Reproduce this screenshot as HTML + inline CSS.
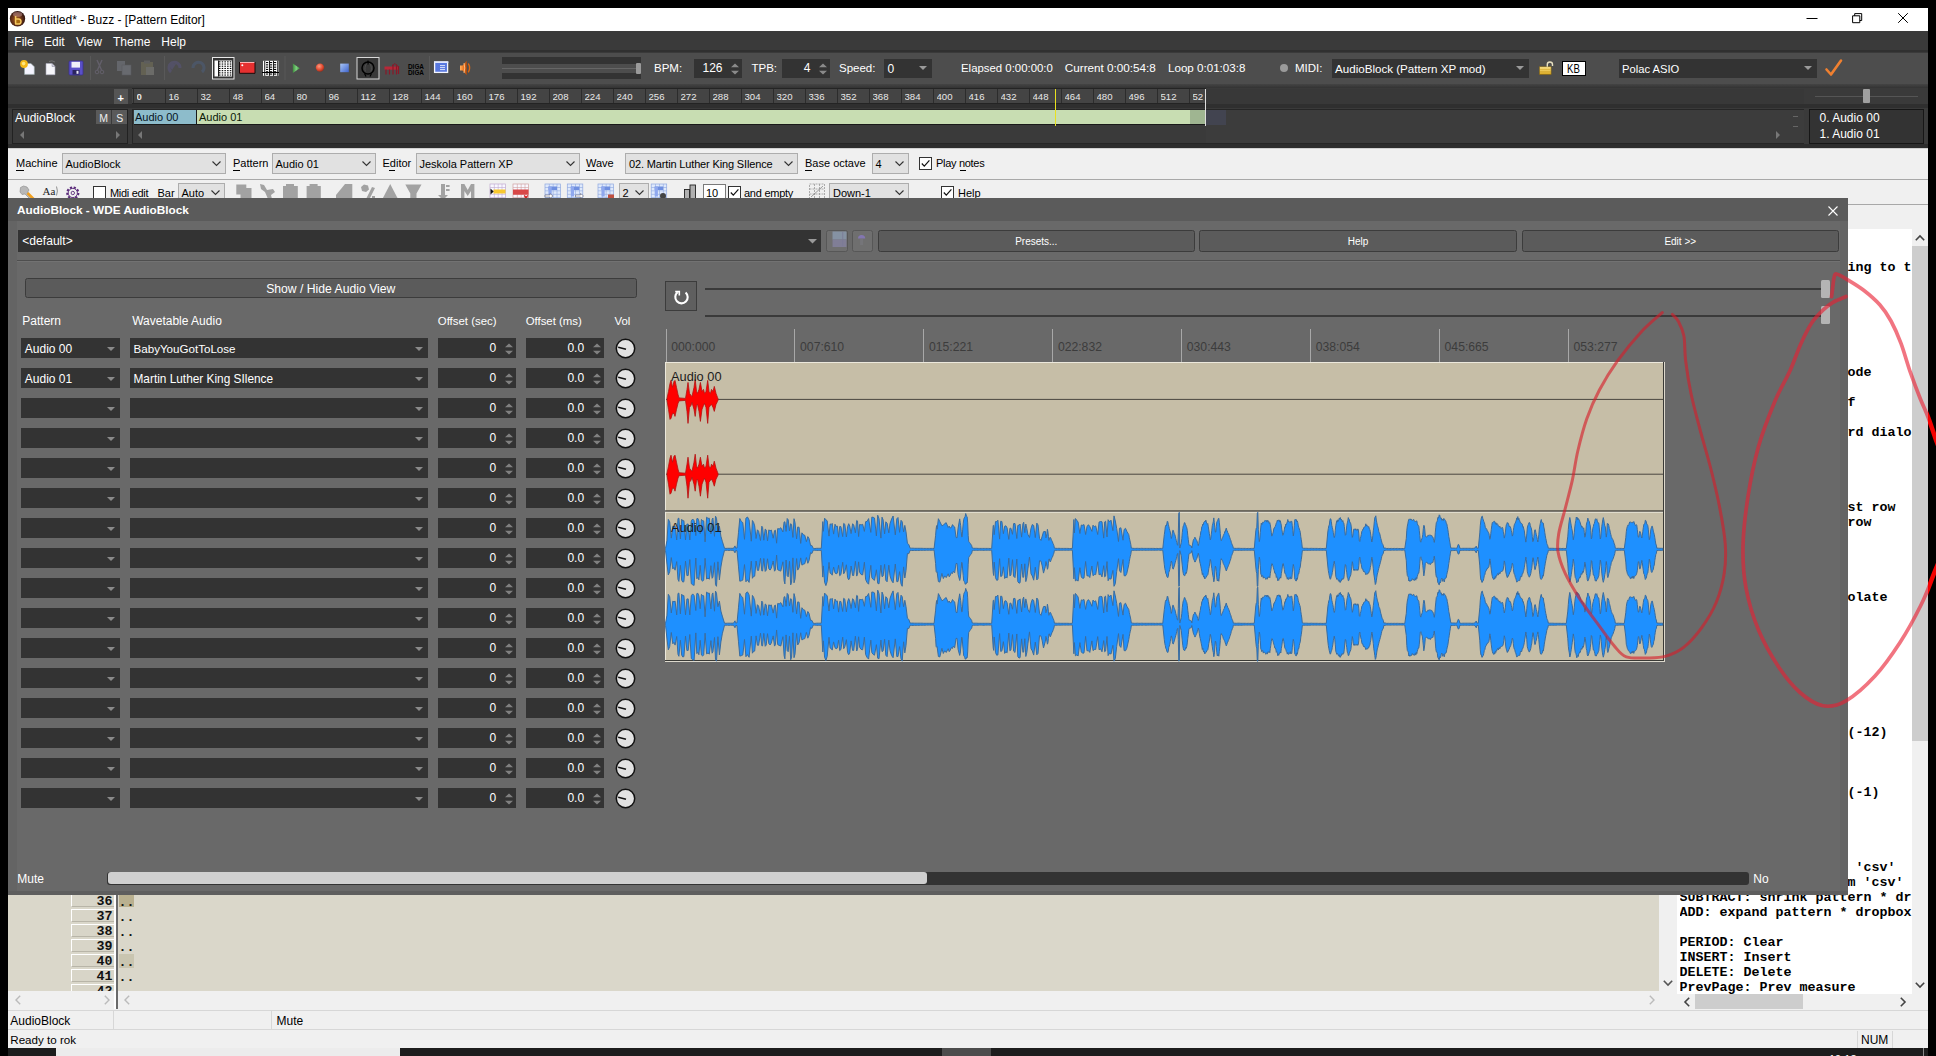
<!DOCTYPE html><html><head><meta charset="utf-8"><title>Buzz</title><style>
*{box-sizing:border-box;margin:0;padding:0}
html,body{width:1936px;height:1056px;overflow:hidden;background:#000}
body{font-family:"Liberation Sans",sans-serif;font-size:12px;position:relative}
div{position:absolute}
svg{position:absolute;overflow:visible}
.t{white-space:pre;line-height:20px;height:20px}
.w{color:#fff}
.m{font-family:"Liberation Mono",monospace;font-weight:bold;font-size:13.33px;white-space:pre;line-height:15px;height:15px;color:#000}
.cb{background:#e1e1e1;border:1px solid #adadad}
.dk{background:#333}
</style></head><body>
<div style="left:8px;top:8px;width:1920px;height:1040px;background:#f0f0f0"></div>
<div style="left:8px;top:8px;width:1920px;height:23px;background:#fff"></div>
<svg style="left:9px;top:10px" width="18" height="18" viewBox="0 0 18 18"><defs><radialGradient id="bz" cx="0.45" cy="0.55" r="0.55"><stop offset="0" stop-color="#b06c20"/><stop offset="0.5" stop-color="#74391a"/><stop offset="1" stop-color="#2e1410"/></radialGradient></defs><circle cx="8.5" cy="8.8" r="7.7" fill="url(#bz)"/><ellipse cx="8.6" cy="4.4" rx="4.6" ry="2.4" fill="#d8a8a8" opacity="0.45"/><path d="M6.6 5.9v8.2h2.8a2.6 2.6 0 0 0 0-5.2h-2.8" fill="#a86a10" stroke="#f4c860" stroke-width="1.5" stroke-linejoin="round"/></svg>
<div class="t" style="left:31.5px;top:9.5px;color:#000">Untitled* - Buzz - [Pattern Editor]</div>
<svg style="left:1800px;top:8px" width="128" height="23" viewBox="0 0 128 23" fill="none" stroke="#000" stroke-width="1"><path d="M6.5 10.5h11"/><path d="M52.6 7.8h7.2v6.9h-7.2z"/><path d="M54.7 7.8v-2.2h7v6.9h-1.9"/><path d="M98.2 5.2l9.6 9.6M107.8 5.2l-9.6 9.6"/></svg>
<div style="left:8px;top:31px;width:1920px;height:21px;background:#3a3a3a"></div>
<div style="left:8px;top:50px;width:1920px;height:2.3px;background:#303030"></div>
<div class="t" style="left:14.3px;top:31.5px;color:#fff">File</div>
<div class="t" style="left:44px;top:31.5px;color:#fff">Edit</div>
<div class="t" style="left:76px;top:31.5px;color:#fff">View</div>
<div class="t" style="left:113px;top:31.5px;color:#fff">Theme</div>
<div class="t" style="left:161.3px;top:31.5px;color:#fff">Help</div>
<div style="left:8px;top:52px;width:1920px;height:32px;background:#4d4d4d"></div>
<div style="left:8px;top:52px;width:1920px;height:1px;background:#3a3a3a"></div>
<svg style="left:0;top:0" width="1936" height="90" viewBox="0 0 1936 90"><defs><linearGradient id="gb" x1="0" y1="0" x2="1" y2="1"><stop offset="0" stop-color="#a9c6f7"/><stop offset="1" stop-color="#3f64cc"/></linearGradient><radialGradient id="gr" cx="0.4" cy="0.35" r="0.7"><stop offset="0" stop-color="#ff9a80"/><stop offset="0.6" stop-color="#e04a30"/><stop offset="1" stop-color="#8a2a1a"/></radialGradient><linearGradient id="gg" x1="0" y1="0" x2="1" y2="0"><stop offset="0" stop-color="#3c8a3c"/><stop offset="0.5" stop-color="#7fd07f"/><stop offset="1" stop-color="#3c9a3c"/></linearGradient><linearGradient id="go" x1="0" y1="0" x2="1" y2="0"><stop offset="0" stop-color="#ffb060"/><stop offset="0.5" stop-color="#f07820"/><stop offset="1" stop-color="#b04808"/></linearGradient><linearGradient id="gy" x1="0" y1="0" x2="0" y2="1"><stop offset="0" stop-color="#ffe890"/><stop offset="1" stop-color="#d8a820"/></linearGradient></defs><path d="M24.5 63.5h6.5l3.3 3.3v7.6h-9.8z" fill="#f4f4ff" stroke="#9aa" stroke-width="0.6"/><circle cx="24" cy="64" r="3.9" fill="#f5b818"/><circle cx="23.6" cy="63.6" r="1.8" fill="#ffe680"/><path d="M46 63.5h6l3 3v8.2h-9z" fill="#f6f6fa" stroke="#aab" stroke-width="0.6"/><path d="M52 63.5v3h3" fill="#ccd" stroke="#889" stroke-width="0.5"/><path d="M49 61.5q3-1.6 6 0.5" fill="none" stroke="#777" stroke-width="0.8"/><rect x="69" y="61" width="14" height="14" rx="1" fill="#5a50c8" stroke="#3a3090" stroke-width="0.8"/><rect x="71.5" y="61.8" width="8.5" height="5.8" fill="#f0f0fa"/><rect x="72.5" y="70" width="7" height="4.6" fill="#2a2460"/><rect x="76.5" y="70.8" width="2" height="3" fill="#e8e8f8"/><rect x="90" y="56" width="1" height="24" fill="#595959"/><rect x="164" y="56" width="1" height="24" fill="#595959"/><rect x="284.5" y="56" width="1" height="24" fill="#595959"/><rect x="429" y="56" width="1" height="24" fill="#595959"/><g opacity="0.22"><path d="M97 60l4.5 10M102 60l-4.5 10" stroke="#b0a0d0" stroke-width="1.4" fill="none"/><circle cx="97" cy="72" r="1.8" fill="none" stroke="#b0a0d0"/><circle cx="102" cy="72" r="1.8" fill="none" stroke="#b0a0d0"/><rect x="117" y="61" width="8" height="10" fill="#b8c0d8"/><rect x="122" y="65" width="9" height="10" fill="#c8d0e8" stroke="#889" stroke-width="0.6"/><rect x="141" y="62" width="12" height="13" fill="#b0a868"/><rect x="144" y="60.5" width="6" height="3" fill="#999"/><rect x="146" y="67" width="8" height="8" fill="#d8d8c8"/><path d="M171 72a5.5 5.5 0 1 1 9-4" fill="none" stroke="#6a60c0" stroke-width="3"/><path d="M168 64l4 6 4-6z" fill="#6a60c0"/><path d="M202 72a5.5 5.5 0 1 0-9-4" fill="none" stroke="#4a78c0" stroke-width="3"/></g><rect x="212.5" y="57.5" width="21.5" height="21.5" fill="#333" stroke="#e8e8e8" stroke-width="1"/><rect x="214.5" y="60.5" width="17.5" height="16" fill="#fff"/><rect x="219.0" y="61.3" width="1.5" height="1.1" fill="#000"/><rect x="221.7" y="61.3" width="1.5" height="1.1" fill="#000"/><rect x="224.4" y="61.3" width="1.5" height="1.1" fill="#000"/><rect x="227.1" y="61.3" width="1.5" height="1.1" fill="#000"/><rect x="229.8" y="61.3" width="1.5" height="1.1" fill="#000"/><rect x="219.0" y="63.5" width="1.5" height="1.1" fill="#000"/><rect x="221.7" y="63.5" width="1.5" height="1.1" fill="#000"/><rect x="224.4" y="63.5" width="1.5" height="1.1" fill="#000"/><rect x="227.1" y="63.5" width="1.5" height="1.1" fill="#000"/><rect x="229.8" y="63.5" width="1.5" height="1.1" fill="#000"/><rect x="219.0" y="65.7" width="1.5" height="1.1" fill="#000"/><rect x="221.7" y="65.7" width="1.5" height="1.1" fill="#000"/><rect x="224.4" y="65.7" width="1.5" height="1.1" fill="#000"/><rect x="227.1" y="65.7" width="1.5" height="1.1" fill="#000"/><rect x="229.8" y="65.7" width="1.5" height="1.1" fill="#000"/><rect x="219.0" y="67.9" width="1.5" height="1.1" fill="#000"/><rect x="221.7" y="67.9" width="1.5" height="1.1" fill="#000"/><rect x="224.4" y="67.9" width="1.5" height="1.1" fill="#000"/><rect x="227.1" y="67.9" width="1.5" height="1.1" fill="#000"/><rect x="229.8" y="67.9" width="1.5" height="1.1" fill="#000"/><rect x="219.0" y="70.1" width="1.5" height="1.1" fill="#000"/><rect x="221.7" y="70.1" width="1.5" height="1.1" fill="#000"/><rect x="224.4" y="70.1" width="1.5" height="1.1" fill="#000"/><rect x="227.1" y="70.1" width="1.5" height="1.1" fill="#000"/><rect x="229.8" y="70.1" width="1.5" height="1.1" fill="#000"/><rect x="219.0" y="72.3" width="1.5" height="1.1" fill="#000"/><rect x="221.7" y="72.3" width="1.5" height="1.1" fill="#000"/><rect x="224.4" y="72.3" width="1.5" height="1.1" fill="#000"/><rect x="227.1" y="72.3" width="1.5" height="1.1" fill="#000"/><rect x="229.8" y="72.3" width="1.5" height="1.1" fill="#000"/><rect x="219.0" y="74.5" width="1.5" height="1.1" fill="#000"/><rect x="221.7" y="74.5" width="1.5" height="1.1" fill="#000"/><rect x="224.4" y="74.5" width="1.5" height="1.1" fill="#000"/><rect x="227.1" y="74.5" width="1.5" height="1.1" fill="#000"/><rect x="229.8" y="74.5" width="1.5" height="1.1" fill="#000"/><rect x="218" y="60.5" width="0.9" height="16" fill="#000"/><rect x="239.5" y="62" width="15.5" height="11.3" fill="#e63030"/><rect x="239.5" y="62" width="15.5" height="1" fill="#ffb0b0"/><path d="M239.5 62v11.3h15.5v-11.3" fill="none" stroke="#1a0a0a" stroke-width="1"/><circle cx="242.3" cy="65.3" r="1" fill="#fff"/><rect x="263" y="60.8" width="15.5" height="15" fill="#fff"/><rect x="266.0" y="62.0" width="2.2" height="1.1" fill="#000"/><rect x="270.0" y="62.0" width="2.2" height="1.1" fill="#000"/><rect x="274.0" y="62.0" width="2.2" height="1.1" fill="#000"/><rect x="266.0" y="64.3" width="2.2" height="1.1" fill="#000"/><rect x="270.0" y="64.3" width="2.2" height="1.1" fill="#000"/><rect x="274.0" y="64.3" width="2.2" height="1.1" fill="#000"/><rect x="266.0" y="66.6" width="2.2" height="1.1" fill="#000"/><rect x="270.0" y="66.6" width="2.2" height="1.1" fill="#000"/><rect x="274.0" y="66.6" width="2.2" height="1.1" fill="#000"/><rect x="266.0" y="68.9" width="2.2" height="1.1" fill="#000"/><rect x="270.0" y="68.9" width="2.2" height="1.1" fill="#000"/><rect x="274.0" y="68.9" width="2.2" height="1.1" fill="#000"/><rect x="266.0" y="71.2" width="2.2" height="1.1" fill="#000"/><rect x="270.0" y="71.2" width="2.2" height="1.1" fill="#000"/><rect x="274.0" y="71.2" width="2.2" height="1.1" fill="#000"/><rect x="266.0" y="73.5" width="2.2" height="1.1" fill="#000"/><rect x="270.0" y="73.5" width="2.2" height="1.1" fill="#000"/><rect x="274.0" y="73.5" width="2.2" height="1.1" fill="#000"/><rect x="264.3" y="60.8" width="0.9" height="15" fill="#000"/><rect x="269" y="60.8" width="0.9" height="15" fill="#000"/><rect x="273" y="60.8" width="0.9" height="15" fill="#000"/><rect x="277.3" y="60.8" width="0.9" height="15" fill="#000"/><rect x="262" y="72" width="17" height="1" fill="#000"/><path d="M292.8 63.4L299.8 68.2L292.8 73z" fill="url(#gg)"/><circle cx="320" cy="67.6" r="4.2" fill="url(#gr)"/><rect x="340.2" y="63.6" width="8.6" height="8.6" fill="url(#gb)"/><rect x="357" y="57.5" width="22" height="21.5" fill="#383838" stroke="#d8d8d8" stroke-width="1"/><circle cx="368" cy="68" r="6" fill="none" stroke="#000" stroke-width="1.5"/><path d="M368 60.5v4" stroke="#000" stroke-width="1.2"/><path d="M364.5 73.5l1.5 3M371.5 73.5l-1.5 3" stroke="#000" stroke-width="1.2"/><path d="M367 63.5c-2 1-2.6 6-1.6 8M369.5 63.5c2 1 2.4 6 1.4 8" stroke="#555" stroke-width="0.8" fill="none"/><rect x="384.5" y="66.5" width="14.5" height="3.2" fill="#b82838"/><path d="M386 69.5v5M389.5 69.5v5M393 64.5v10M396.5 64.5v10M398.5 66v8" stroke="#8a1828" stroke-width="1.2"/><path d="M392 66l3-2.5 3 3" stroke="#8a1828" stroke-width="1" fill="none"/><text x="408" y="69.3" font-family="Liberation Sans" font-weight="bold" font-size="6.4" fill="#000" textLength="16" lengthAdjust="spacingAndGlyphs">DIGA</text><text x="408" y="75.3" font-family="Liberation Sans" font-weight="bold" font-size="6.4" fill="#000" textLength="16" lengthAdjust="spacingAndGlyphs">DIGA</text><rect x="434.6" y="62" width="13" height="10.4" fill="#5878e0" stroke="#f4f6ff" stroke-width="1.3"/><rect x="434" y="61.4" width="14.3" height="1.6" fill="#dfe6ff"/><path d="M440 65.6h5M440 67.6h5M440 69.6h5" stroke="#e8eeff" stroke-width="0.9"/><path d="M460 65.5h2.6l4.2-4.8v14.6l-4.2-4.8h-2.6z" fill="url(#go)"/><path d="M468.3 63.5q2.6 4.4 0 8.8" fill="none" stroke="#e06810" stroke-width="1.4"/><path d="M464 63q1.5 5 0 10" stroke="#ffd0a0" stroke-width="0.8" fill="none"/><rect x="1539.5" y="66.8" width="11.6" height="7.6" fill="url(#gy)" stroke="#8a6810" stroke-width="0.6"/><path d="M1540 69.3h10.6M1540 71.8h10.6" stroke="#c89a20" stroke-width="0.6"/><path d="M1547.3 66.8v-2.2a2.6 2.6 0 0 1 5.2 0v1.4" fill="none" stroke="#e8e0c0" stroke-width="1.4"/></svg>
<div style="left:502px;top:57px;width:139px;height:6.5px;background:#333"></div>
<div style="left:502px;top:72.5px;width:139px;height:6.5px;background:#333"></div>
<div style="left:502px;top:67.5px;width:136px;height:1px;background:#666"></div>
<div style="left:636px;top:63px;width:5px;height:11px;background:#9a9a9a;border-radius:1px"></div>
<div class="t" style="left:654px;top:58px;color:#fff;font-size:11.5px">BPM:</div>
<div style="left:694px;top:58.5px;width:48px;height:19.5px;background:#333"></div>
<div class="t" style="left:694px;top:57.5px;color:#fff;width:28.5px;text-align:right">126</div>
<div class="t" style="left:751.5px;top:58px;color:#fff;font-size:11.5px">TPB:</div>
<div style="left:782px;top:58.5px;width:48px;height:19.5px;background:#333"></div>
<div class="t" style="left:782px;top:57.5px;color:#fff;width:28.5px;text-align:right">4</div>
<div class="t" style="left:839px;top:58px;color:#fff;font-size:11.5px">Speed:</div>
<div style="left:884px;top:58.5px;width:48px;height:19.5px;background:#333"></div>
<div class="t" style="left:887.5px;top:58.5px;color:#fff">0</div>
<svg style="left:731px;top:62.5px" width="8" height="12" viewBox="0 0 8 12"><path d="M0 4.2L4 0.6L8 4.2zM0 7.8L4 11.4L8 7.8z" fill="#8a8a8a"/></svg>
<svg style="left:819px;top:62.5px" width="8" height="12" viewBox="0 0 8 12"><path d="M0 4.2L4 0.6L8 4.2zM0 7.8L4 11.4L8 7.8z" fill="#8a8a8a"/></svg>
<svg style="left:919px;top:66px" width="8" height="4" viewBox="0 0 8 4"><path d="M0 0H8L4.0 4z" fill="#9a9a9a"/></svg>
<div class="t" style="left:961px;top:58px;color:#fff;font-size:11.4px">Elapsed 0:00:00:0</div>
<div class="t" style="left:1064.8px;top:58px;color:#fff;font-size:11.7px">Current 0:00:54:8</div>
<div class="t" style="left:1168px;top:58px;color:#fff;font-size:11.6px">Loop 0:01:03:8</div>
<div style="left:1279.5px;top:64px;width:8px;height:8px;background:#9a9a9a;border-radius:50%"></div>
<div class="t" style="left:1295px;top:58px;color:#fff;font-size:11.5px">MIDI:</div>
<div style="left:1331.5px;top:58.5px;width:197px;height:19.5px;background:#333"></div>
<div class="t" style="left:1335px;top:58.5px;color:#fff;font-size:11.6px">AudioBlock (Pattern XP mod)</div>
<svg style="left:1515.5px;top:66px" width="8" height="4" viewBox="0 0 8 4"><path d="M0 0H8L4.0 4z" fill="#9a9a9a"/></svg>
<div style="left:1562px;top:61px;width:23.5px;height:14.5px;background:#fff;border:1px solid #000"></div>
<div class="t" style="left:1567.3px;top:59px;color:#000;font-size:12px;transform:scaleX(0.8);transform-origin:0 0">KB</div>
<div style="left:1618.5px;top:58.5px;width:198.5px;height:19.5px;background:#333"></div>
<div class="t" style="left:1622px;top:58.5px;color:#fff;font-size:11.2px">Polac ASIO</div>
<svg style="left:1803.5px;top:66px" width="8" height="4" viewBox="0 0 8 4"><path d="M0 0H8L4.0 4z" fill="#9a9a9a"/></svg>
<svg style="left:1825px;top:59px" width="18" height="18" viewBox="0 0 18 18"><path d="M1.5 10.5L6 15.5L16 1.5" fill="none" stroke="#f08030" stroke-width="2.6" stroke-linecap="round" stroke-linejoin="round"/></svg>
<div style="left:8px;top:84px;width:1920px;height:64px;background:#3a3a3a"></div>
<div style="left:8px;top:83.5px;width:1920px;height:4px;background:linear-gradient(#444,#333)"></div>
<div style="left:8px;top:103.7px;width:1920px;height:4.8px;background:#2f2f2f"></div>
<div style="left:8px;top:143.5px;width:1920px;height:4px;background:#2d2d2d"></div>
<div style="left:132px;top:88.5px;width:1073.5px;height:15px;background:#444"></div>
<div style="left:1205.5px;top:88.5px;width:598.5px;height:15px;background:#383838"></div>
<div style="left:132.5px;top:88.5px;width:1px;height:15px;background:#2c2c2c"></div>
<div class="t" style="left:136.5px;top:86.5px;color:#e8e8e8;font-size:9.6px;font-weight:bold;width:30px;overflow:hidden">0</div>
<div style="left:164.5px;top:88.5px;width:1px;height:15px;background:#2c2c2c"></div>
<div class="t" style="left:168.5px;top:86.5px;color:#e8e8e8;font-size:9.6px;width:30px;overflow:hidden">16</div>
<div style="left:196.5px;top:88.5px;width:1px;height:15px;background:#2c2c2c"></div>
<div class="t" style="left:200.5px;top:86.5px;color:#e8e8e8;font-size:9.6px;width:30px;overflow:hidden">32</div>
<div style="left:228.5px;top:88.5px;width:1px;height:15px;background:#2c2c2c"></div>
<div class="t" style="left:232.5px;top:86.5px;color:#e8e8e8;font-size:9.6px;width:30px;overflow:hidden">48</div>
<div style="left:260.5px;top:88.5px;width:1px;height:15px;background:#2c2c2c"></div>
<div class="t" style="left:264.5px;top:86.5px;color:#e8e8e8;font-size:9.6px;width:30px;overflow:hidden">64</div>
<div style="left:292.5px;top:88.5px;width:1px;height:15px;background:#2c2c2c"></div>
<div class="t" style="left:296.5px;top:86.5px;color:#e8e8e8;font-size:9.6px;width:30px;overflow:hidden">80</div>
<div style="left:324.5px;top:88.5px;width:1px;height:15px;background:#2c2c2c"></div>
<div class="t" style="left:328.5px;top:86.5px;color:#e8e8e8;font-size:9.6px;width:30px;overflow:hidden">96</div>
<div style="left:356.5px;top:88.5px;width:1px;height:15px;background:#2c2c2c"></div>
<div class="t" style="left:360.5px;top:86.5px;color:#e8e8e8;font-size:9.6px;width:30px;overflow:hidden">112</div>
<div style="left:388.5px;top:88.5px;width:1px;height:15px;background:#2c2c2c"></div>
<div class="t" style="left:392.5px;top:86.5px;color:#e8e8e8;font-size:9.6px;width:30px;overflow:hidden">128</div>
<div style="left:420.5px;top:88.5px;width:1px;height:15px;background:#2c2c2c"></div>
<div class="t" style="left:424.5px;top:86.5px;color:#e8e8e8;font-size:9.6px;width:30px;overflow:hidden">144</div>
<div style="left:452.5px;top:88.5px;width:1px;height:15px;background:#2c2c2c"></div>
<div class="t" style="left:456.5px;top:86.5px;color:#e8e8e8;font-size:9.6px;width:30px;overflow:hidden">160</div>
<div style="left:484.5px;top:88.5px;width:1px;height:15px;background:#2c2c2c"></div>
<div class="t" style="left:488.5px;top:86.5px;color:#e8e8e8;font-size:9.6px;width:30px;overflow:hidden">176</div>
<div style="left:516.5px;top:88.5px;width:1px;height:15px;background:#2c2c2c"></div>
<div class="t" style="left:520.5px;top:86.5px;color:#e8e8e8;font-size:9.6px;width:30px;overflow:hidden">192</div>
<div style="left:548.5px;top:88.5px;width:1px;height:15px;background:#2c2c2c"></div>
<div class="t" style="left:552.5px;top:86.5px;color:#e8e8e8;font-size:9.6px;width:30px;overflow:hidden">208</div>
<div style="left:580.5px;top:88.5px;width:1px;height:15px;background:#2c2c2c"></div>
<div class="t" style="left:584.5px;top:86.5px;color:#e8e8e8;font-size:9.6px;width:30px;overflow:hidden">224</div>
<div style="left:612.5px;top:88.5px;width:1px;height:15px;background:#2c2c2c"></div>
<div class="t" style="left:616.5px;top:86.5px;color:#e8e8e8;font-size:9.6px;width:30px;overflow:hidden">240</div>
<div style="left:644.5px;top:88.5px;width:1px;height:15px;background:#2c2c2c"></div>
<div class="t" style="left:648.5px;top:86.5px;color:#e8e8e8;font-size:9.6px;width:30px;overflow:hidden">256</div>
<div style="left:676.5px;top:88.5px;width:1px;height:15px;background:#2c2c2c"></div>
<div class="t" style="left:680.5px;top:86.5px;color:#e8e8e8;font-size:9.6px;width:30px;overflow:hidden">272</div>
<div style="left:708.5px;top:88.5px;width:1px;height:15px;background:#2c2c2c"></div>
<div class="t" style="left:712.5px;top:86.5px;color:#e8e8e8;font-size:9.6px;width:30px;overflow:hidden">288</div>
<div style="left:740.5px;top:88.5px;width:1px;height:15px;background:#2c2c2c"></div>
<div class="t" style="left:744.5px;top:86.5px;color:#e8e8e8;font-size:9.6px;width:30px;overflow:hidden">304</div>
<div style="left:772.5px;top:88.5px;width:1px;height:15px;background:#2c2c2c"></div>
<div class="t" style="left:776.5px;top:86.5px;color:#e8e8e8;font-size:9.6px;width:30px;overflow:hidden">320</div>
<div style="left:804.5px;top:88.5px;width:1px;height:15px;background:#2c2c2c"></div>
<div class="t" style="left:808.5px;top:86.5px;color:#e8e8e8;font-size:9.6px;width:30px;overflow:hidden">336</div>
<div style="left:836.5px;top:88.5px;width:1px;height:15px;background:#2c2c2c"></div>
<div class="t" style="left:840.5px;top:86.5px;color:#e8e8e8;font-size:9.6px;width:30px;overflow:hidden">352</div>
<div style="left:868.5px;top:88.5px;width:1px;height:15px;background:#2c2c2c"></div>
<div class="t" style="left:872.5px;top:86.5px;color:#e8e8e8;font-size:9.6px;width:30px;overflow:hidden">368</div>
<div style="left:900.5px;top:88.5px;width:1px;height:15px;background:#2c2c2c"></div>
<div class="t" style="left:904.5px;top:86.5px;color:#e8e8e8;font-size:9.6px;width:30px;overflow:hidden">384</div>
<div style="left:932.5px;top:88.5px;width:1px;height:15px;background:#2c2c2c"></div>
<div class="t" style="left:936.5px;top:86.5px;color:#e8e8e8;font-size:9.6px;width:30px;overflow:hidden">400</div>
<div style="left:964.5px;top:88.5px;width:1px;height:15px;background:#2c2c2c"></div>
<div class="t" style="left:968.5px;top:86.5px;color:#e8e8e8;font-size:9.6px;width:30px;overflow:hidden">416</div>
<div style="left:996.5px;top:88.5px;width:1px;height:15px;background:#2c2c2c"></div>
<div class="t" style="left:1000.5px;top:86.5px;color:#e8e8e8;font-size:9.6px;width:30px;overflow:hidden">432</div>
<div style="left:1028.5px;top:88.5px;width:1px;height:15px;background:#2c2c2c"></div>
<div class="t" style="left:1032.5px;top:86.5px;color:#e8e8e8;font-size:9.6px;width:30px;overflow:hidden">448</div>
<div style="left:1060.5px;top:88.5px;width:1px;height:15px;background:#2c2c2c"></div>
<div class="t" style="left:1064.5px;top:86.5px;color:#e8e8e8;font-size:9.6px;width:30px;overflow:hidden">464</div>
<div style="left:1092.5px;top:88.5px;width:1px;height:15px;background:#2c2c2c"></div>
<div class="t" style="left:1096.5px;top:86.5px;color:#e8e8e8;font-size:9.6px;width:30px;overflow:hidden">480</div>
<div style="left:1124.5px;top:88.5px;width:1px;height:15px;background:#2c2c2c"></div>
<div class="t" style="left:1128.5px;top:86.5px;color:#e8e8e8;font-size:9.6px;width:30px;overflow:hidden">496</div>
<div style="left:1156.5px;top:88.5px;width:1px;height:15px;background:#2c2c2c"></div>
<div class="t" style="left:1160.5px;top:86.5px;color:#e8e8e8;font-size:9.6px;width:30px;overflow:hidden">512</div>
<div style="left:1188.5px;top:88.5px;width:1px;height:15px;background:#2c2c2c"></div>
<div class="t" style="left:1192.5px;top:86.5px;color:#e8e8e8;font-size:9.6px;width:10.8px;overflow:hidden">528</div>
<div style="left:132px;top:88.2px;width:1073.5px;height:0.8px;background:#242424"></div>
<div style="left:132px;top:102.8px;width:1073.5px;height:0.9px;background:#242424"></div>
<div style="left:114px;top:89px;width:13.5px;height:14.5px;background:#555"></div>
<div class="t" style="left:117.5px;top:87.5px;color:#fff;font-size:11px;font-weight:bold">+</div>
<div style="left:1815px;top:95.5px;width:103px;height:1px;background:#555"></div>
<div style="left:1863px;top:89px;width:6.5px;height:13.5px;background:#a0a0a0;border-radius:1px"></div>
<div style="left:12px;top:108.5px;width:116px;height:35px;background:#3a3a3a;border:1px solid #222"></div>
<div class="t" style="left:15px;top:107.5px;color:#fff">AudioBlock</div>
<div style="left:96px;top:110px;width:14.5px;height:14px;background:#5a5a5a"></div>
<div style="left:112px;top:110px;width:14.5px;height:14px;background:#5a5a5a"></div>
<div class="t" style="left:99.3px;top:107.5px;color:#eee;font-size:10.5px">M</div>
<div class="t" style="left:116.3px;top:107.5px;color:#eee;font-size:10.5px">S</div>
<svg style="left:20px;top:131px" width="4" height="8" viewBox="0 0 4 8"><path d="M4 0V8L0 4z" fill="#777"/></svg>
<svg style="left:116px;top:131px" width="4" height="8" viewBox="0 0 4 8"><path d="M0 0V8L4 4z" fill="#777"/></svg>
<div style="left:132px;top:108.5px;width:1672px;height:35px;background:#3a3a3a;border:1px solid #262626"></div>
<div style="left:1205.5px;top:109.5px;width:598px;height:33px;background:#3c3c3c"></div>
<div style="left:133.5px;top:109.5px;width:63.5px;height:15.5px;background:#8dbccb;border:1px solid #1a1a1a;border-width:0 1px 1px 0"></div>
<div style="left:197px;top:109.5px;width:992.5px;height:15.5px;background:#c8ddb2;border-bottom:1px solid #1a1a1a"></div>
<div style="left:1189.5px;top:109.5px;width:16px;height:15.5px;background:#9fb591;border-bottom:1px solid #1a1a1a"></div>
<div style="left:1205.5px;top:109.5px;width:20px;height:15.5px;background:#424450"></div>
<div class="t" style="left:135px;top:107.3px;color:#08141e;font-size:11px">Audio 00</div>
<div class="t" style="left:199px;top:107.3px;color:#0c1a08;font-size:11px">Audio 01</div>
<div style="left:1054.5px;top:88.5px;width:1.3px;height:37px;background:#e8e020"></div>
<div style="left:1205px;top:88.5px;width:1.2px;height:37px;background:#ddd"></div>
<svg style="left:138px;top:131px" width="4" height="8" viewBox="0 0 4 8"><path d="M4 0V8L0 4z" fill="#777"/></svg>
<svg style="left:1776px;top:131px" width="4" height="8" viewBox="0 0 4 8"><path d="M0 0V8L4 4z" fill="#777"/></svg>
<div style="left:1793px;top:115.5px;width:5px;height:1px;background:#666"></div>
<div style="left:1793px;top:125.5px;width:5px;height:1px;background:#666"></div>
<div style="left:1808.5px;top:108.5px;width:115.5px;height:35px;background:#333;border:1px solid #161616"></div>
<div class="t" style="left:1819.5px;top:107.5px;color:#fff">0. Audio 00</div>
<div class="t" style="left:1819.5px;top:124px;color:#fff">1. Audio 01</div>
<div style="left:8px;top:147.5px;width:1920px;height:1.5px;background:#d0d0d0"></div>
<div style="left:8px;top:149px;width:1920px;height:30px;background:#f0f0f0"></div>
<div style="left:8px;top:179px;width:1920px;height:1px;background:#a8a8a8"></div>
<div style="left:8px;top:180px;width:1920px;height:24px;background:#f0f0f0"></div>
<div style="left:1848px;top:204px;width:80px;height:1px;background:#a8a8a8"></div>
<div class="t" style="left:16px;top:153px;color:#000;font-size:11px;">Machine</div>
<div style="left:16px;top:170px;width:8px;height:1px;background:#000"></div>
<div class="cb" style="left:61.5px;top:153px;width:164px;height:21px;"></div><div class="t" style="left:65.5px;top:153.5px;color:#000;font-size:11px;letter-spacing:0px">AudioBlock</div><svg style="left:211.5px;top:161.0px" width="9" height="5" viewBox="0 0 9 5"><path d="M0.5 0.5L4.5 4.5L8.5 0.5" fill="none" stroke="#333" stroke-width="1.1"/></svg>
<div class="t" style="left:233px;top:153px;color:#000;font-size:11px;">Pattern</div>
<div style="left:233px;top:170px;width:6.5px;height:1px;background:#000"></div>
<div class="cb" style="left:271.5px;top:153px;width:104px;height:21px;"></div><div class="t" style="left:275.5px;top:153.5px;color:#000;font-size:11px;letter-spacing:0px">Audio 01</div><svg style="left:361.5px;top:161.0px" width="9" height="5" viewBox="0 0 9 5"><path d="M0.5 0.5L4.5 4.5L8.5 0.5" fill="none" stroke="#333" stroke-width="1.1"/></svg>
<div class="t" style="left:382.5px;top:153px;color:#000;font-size:11px;">Editor</div>
<div style="left:388.5px;top:170px;width:6px;height:1px;background:#000"></div>
<div class="cb" style="left:415.5px;top:153px;width:164px;height:21px;"></div><div class="t" style="left:419.5px;top:153.5px;color:#000;font-size:11px;letter-spacing:0px">Jeskola Pattern XP</div><svg style="left:565.5px;top:161.0px" width="9" height="5" viewBox="0 0 9 5"><path d="M0.5 0.5L4.5 4.5L8.5 0.5" fill="none" stroke="#333" stroke-width="1.1"/></svg>
<div class="t" style="left:586px;top:153px;color:#000;font-size:11px;">Wave</div>
<div style="left:586px;top:170px;width:10px;height:1px;background:#000"></div>
<div class="cb" style="left:625px;top:153px;width:172.5px;height:21px;"></div><div class="t" style="left:629px;top:153.5px;color:#000;font-size:11px;letter-spacing:-0.15px">02. Martin Luther King SIlence</div><svg style="left:783.5px;top:161.0px" width="9" height="5" viewBox="0 0 9 5"><path d="M0.5 0.5L4.5 4.5L8.5 0.5" fill="none" stroke="#333" stroke-width="1.1"/></svg>
<div class="t" style="left:805px;top:153px;color:#000;font-size:11px;">Base octave</div>
<div style="left:805px;top:170px;width:7px;height:1px;background:#000"></div>
<div class="cb" style="left:871.5px;top:153px;width:37px;height:21px;"></div><div class="t" style="left:875.5px;top:153.5px;color:#000;font-size:11px;letter-spacing:0px">4</div><svg style="left:894.5px;top:161.0px" width="9" height="5" viewBox="0 0 9 5"><path d="M0.5 0.5L4.5 4.5L8.5 0.5" fill="none" stroke="#333" stroke-width="1.1"/></svg>
<div style="left:919px;top:157px;width:13px;height:13px;background:#fff;border:1px solid #333"></div><svg style="left:919px;top:157px" width="13" height="13" viewBox="0 0 13 13"><path d="M2.8 6.5L5.3 9.2L10.4 3.4" fill="none" stroke="#111" stroke-width="1.2"/></svg>
<div class="t" style="left:936px;top:153px;color:#000;font-size:11px;letter-spacing:-0.3px">Play notes</div>
<div style="left:960px;top:170px;width:6px;height:1px;background:#000"></div>
<svg style="left:0;top:0" width="1936" height="200" viewBox="0 0 1936 200"><path d="M20.5 187.5l3-1.5 3.5 1 2 3-1.5 2.5 5.5 5.5-2 2-6-6-3 .5-2-2.5z" fill="#b8b8b8" stroke="#888" stroke-width="0.6"/><path d="M27.5 193l6 6" stroke="#f0a020" stroke-width="2.6"/><text x="42.5" y="194.5" font-family="Liberation Serif" font-size="11" fill="#222">Aa</text><path d="M56.5 186.5q1.8 4.5 0 9" stroke="#777" stroke-width="0.8" fill="none"/><circle cx="72.8" cy="193" r="5.6" fill="none" stroke="#5a2a7a" stroke-width="2" stroke-dasharray="2.2 1.6"/><circle cx="72.8" cy="193" r="4.6" fill="none" stroke="#5a2a7a" stroke-width="0.9"/><circle cx="72.8" cy="193" r="1.7" fill="none" stroke="#5a2a7a" stroke-width="0.9"/><g fill="#a2a2a2"><rect x="236.3" y="184.5" width="10" height="10"/><rect x="240.5" y="188" width="11" height="11"/><path d="M260 184l4 1 3 5 6-1 2 3-4 3 1 4h-4l-3-7-4-3z"/><rect x="283" y="186" width="14.8" height="13"/><rect x="286" y="184" width="8" height="3"/><rect x="306.6" y="186" width="14.2" height="13"/><rect x="309.6" y="184" width="8" height="3"/><path d="M345 184h7.3v15h-16.3v-4z"/><path d="M361 187l3-2.5 4 1 1 4-3 2.5-4-1zM366 199l6-12 3 1-6 12zM372 196h3v3h-3z"/><path d="M390.2 184l7.8 15h-15.6z"/><path d="M405.3 184.5h16.2l-5 9v6h-6.2v-6z"/><path d="M441 184h4v11h3l-5 5-5-5h3zM446 185h3.6v2H446zM446 189h3.6v2H446z"/><path d="M461 184h3.4l3.3 6 3.3-6h3.4v16h-3.4v-9l-3.3 5-3.3-5v9H461z"/></g><rect x="490" y="184" width="15.5" height="15" fill="#f8f8ff" stroke="#c0a8d0" stroke-width="0.7"/><rect x="493.9" y="184" width="0.6" height="15" fill="#c0a8d0"/><rect x="497.8" y="184" width="0.6" height="15" fill="#c0a8d0"/><rect x="501.7" y="184" width="0.6" height="15" fill="#c0a8d0"/><rect x="490" y="187.3" width="15.5" height="0.6" fill="#c0a8d0"/><rect x="490" y="190.6" width="15.5" height="0.6" fill="#c0a8d0"/><rect x="490" y="193.9" width="15.5" height="0.6" fill="#c0a8d0"/><rect x="490" y="197.2" width="15.5" height="0.6" fill="#c0a8d0"/><rect x="493.5" y="189.5" width="12" height="4" fill="#f8c830"/><path d="M490.5 188.5l3.2 3-3.2 3z" fill="#111"/><rect x="513" y="184" width="15.5" height="15" fill="#f8f8ff" stroke="#d0a0a0" stroke-width="0.7"/><rect x="516.9" y="184" width="0.6" height="15" fill="#d0a0a0"/><rect x="520.8" y="184" width="0.6" height="15" fill="#d0a0a0"/><rect x="524.7" y="184" width="0.6" height="15" fill="#d0a0a0"/><rect x="513" y="187.3" width="15.5" height="0.6" fill="#d0a0a0"/><rect x="513" y="190.6" width="15.5" height="0.6" fill="#d0a0a0"/><rect x="513" y="193.9" width="15.5" height="0.6" fill="#d0a0a0"/><rect x="513" y="197.2" width="15.5" height="0.6" fill="#d0a0a0"/><rect x="513" y="189.5" width="15.5" height="5.2" fill="#d84848"/><path d="M524 195.5l4 3.5M528 195.5l-4 3.5" stroke="#d02020" stroke-width="1.2"/><rect x="545" y="184" width="15.5" height="15" fill="#dfe9fb" stroke="#8fa8e0" stroke-width="0.7"/><rect x="548.9" y="184" width="0.6" height="15" fill="#8fa8e0"/><rect x="552.8" y="184" width="0.6" height="15" fill="#8fa8e0"/><rect x="556.7" y="184" width="0.6" height="15" fill="#8fa8e0"/><rect x="545" y="187.3" width="15.5" height="0.6" fill="#8fa8e0"/><rect x="545" y="190.6" width="15.5" height="0.6" fill="#8fa8e0"/><rect x="545" y="193.9" width="15.5" height="0.6" fill="#8fa8e0"/><rect x="545" y="197.2" width="15.5" height="0.6" fill="#8fa8e0"/><rect x="548.5" y="186.5" width="8.5" height="3.5" fill="#6f8fe0"/><rect x="548.5" y="186.5" width="3.2" height="10" fill="#8fa8ee"/><rect x="567.3" y="184" width="15.5" height="15" fill="#dfe9fb" stroke="#8fa8e0" stroke-width="0.7"/><rect x="571.2" y="184" width="0.6" height="15" fill="#8fa8e0"/><rect x="575.1" y="184" width="0.6" height="15" fill="#8fa8e0"/><rect x="579.0" y="184" width="0.6" height="15" fill="#8fa8e0"/><rect x="567.3" y="187.3" width="15.5" height="0.6" fill="#8fa8e0"/><rect x="567.3" y="190.6" width="15.5" height="0.6" fill="#8fa8e0"/><rect x="567.3" y="193.9" width="15.5" height="0.6" fill="#8fa8e0"/><rect x="567.3" y="197.2" width="15.5" height="0.6" fill="#8fa8e0"/><rect x="570.8" y="186.5" width="8.5" height="3.5" fill="#6f8fe0"/><rect x="570.8" y="186.5" width="3.2" height="10" fill="#8fa8ee"/><rect x="598" y="184" width="15.5" height="15" fill="#dfe9fb" stroke="#8fa8e0" stroke-width="0.7"/><rect x="601.9" y="184" width="0.6" height="15" fill="#8fa8e0"/><rect x="605.8" y="184" width="0.6" height="15" fill="#8fa8e0"/><rect x="609.7" y="184" width="0.6" height="15" fill="#8fa8e0"/><rect x="598" y="187.3" width="15.5" height="0.6" fill="#8fa8e0"/><rect x="598" y="190.6" width="15.5" height="0.6" fill="#8fa8e0"/><rect x="598" y="193.9" width="15.5" height="0.6" fill="#8fa8e0"/><rect x="598" y="197.2" width="15.5" height="0.6" fill="#8fa8e0"/><rect x="601.5" y="186.5" width="8.5" height="3.5" fill="#6f8fe0"/><rect x="601.5" y="186.5" width="3.2" height="10" fill="#8fa8ee"/><rect x="651.2" y="184" width="15.5" height="15" fill="#dfe9fb" stroke="#8fa8e0" stroke-width="0.7"/><rect x="655.1" y="184" width="0.6" height="15" fill="#8fa8e0"/><rect x="659.0" y="184" width="0.6" height="15" fill="#8fa8e0"/><rect x="662.9" y="184" width="0.6" height="15" fill="#8fa8e0"/><rect x="651.2" y="187.3" width="15.5" height="0.6" fill="#8fa8e0"/><rect x="651.2" y="190.6" width="15.5" height="0.6" fill="#8fa8e0"/><rect x="651.2" y="193.9" width="15.5" height="0.6" fill="#8fa8e0"/><rect x="651.2" y="197.2" width="15.5" height="0.6" fill="#8fa8e0"/><rect x="654.7" y="186.5" width="8.5" height="3.5" fill="#6f8fe0"/><rect x="654.7" y="186.5" width="3.2" height="10" fill="#8fa8ee"/><path d="M545 195h5v-1.5l3 2.5-3 2.5V197h-5z" fill="#fff" stroke="#667" stroke-width="0.6"/><path d="M583 195h-5v-1.5l-3 2.5 3 2.5V197h5z" fill="#fff" stroke="#667" stroke-width="0.6" transform="translate(1158.5,0) scale(-1,1)"/><rect x="608" y="194.5" width="6" height="4.5" fill="#c05040"/><circle cx="663" cy="196" r="3" fill="#444"/><rect x="684.5" y="189.5" width="5" height="10" fill="#b0b0b0" stroke="#222" stroke-width="0.9"/><rect x="690" y="185" width="5.5" height="14.5" fill="#b0b0b0" stroke="#222" stroke-width="0.9"/><g stroke="#9a9a9a" stroke-width="0.8" fill="none"><rect x="809.5" y="184" width="15" height="15" stroke-dasharray="2 1"/><path d="M814.5 184v15M819.5 184v15M809.5 189h15M809.5 194h15" stroke-dasharray="2 1"/><path d="M811 197l12-11" stroke="#888"/></g></svg>
<div style="left:93px;top:186px;width:13px;height:13px;background:#fff;border:1px solid #333"></div>
<div class="t" style="left:110px;top:182.5px;color:#000;font-size:11px;letter-spacing:-0.3px">Midi edit</div>
<div class="t" style="left:157.5px;top:182.5px;color:#000;font-size:11px;">Bar</div>
<div class="cb" style="left:178px;top:183px;width:46.5px;height:21px;"></div><div class="t" style="left:181.5px;top:182.5px;color:#000;font-size:11px;letter-spacing:0px">Auto</div><svg style="left:210.5px;top:190.0px" width="9" height="5" viewBox="0 0 9 5"><path d="M0.5 0.5L4.5 4.5L8.5 0.5" fill="none" stroke="#333" stroke-width="1.1"/></svg>
<div class="cb" style="left:618.5px;top:183px;width:30px;height:21px;"></div><div class="t" style="left:622.5px;top:182.5px;color:#000;font-size:11px;letter-spacing:0px">2</div><svg style="left:634.5px;top:190.0px" width="9" height="5" viewBox="0 0 9 5"><path d="M0.5 0.5L4.5 4.5L8.5 0.5" fill="none" stroke="#333" stroke-width="1.1"/></svg>
<div style="left:702.5px;top:184px;width:23.5px;height:20px;background:#fff;border:1px solid #7a7a7a"></div>
<div class="t" style="left:706px;top:182.5px;color:#000;font-size:11px;">10</div>
<div style="left:727.5px;top:186px;width:13px;height:13px;background:#fff;border:1px solid #333"></div><svg style="left:727.5px;top:186px" width="13" height="13" viewBox="0 0 13 13"><path d="M2.8 6.5L5.3 9.2L10.4 3.4" fill="none" stroke="#111" stroke-width="1.2"/></svg>
<div class="t" style="left:744px;top:182.5px;color:#000;font-size:11px;letter-spacing:-0.25px">and empty</div>
<div class="cb" style="left:829px;top:183px;width:79.5px;height:21px;"></div><div class="t" style="left:833px;top:182.5px;color:#000;font-size:11px;letter-spacing:0px">Down-1</div><svg style="left:894.5px;top:190.0px" width="9" height="5" viewBox="0 0 9 5"><path d="M0.5 0.5L4.5 4.5L8.5 0.5" fill="none" stroke="#333" stroke-width="1.1"/></svg>
<div style="left:941px;top:186px;width:13px;height:13px;background:#fff;border:1px solid #333"></div><svg style="left:941px;top:186px" width="13" height="13" viewBox="0 0 13 13"><path d="M2.8 6.5L5.3 9.2L10.4 3.4" fill="none" stroke="#111" stroke-width="1.2"/></svg>
<div class="t" style="left:958px;top:182.5px;color:#000;font-size:11px;">Help</div>
<div style="left:1848px;top:228.5px;width:64px;height:765px;background:#fff"></div>
<div style="left:1677px;top:894px;width:235px;height:99.5px;background:#fff"></div>
<div style="left:1912px;top:228.5px;width:16px;height:765px;background:#f0f0f0"></div>
<div style="left:1912px;top:246px;width:16px;height:495px;background:#cdcdcd"></div>
<svg style="left:1915px;top:235px" width="10" height="6" viewBox="0 0 10 6"><path d="M0.8 5.2L5 1L9.2 5.2" fill="none" stroke="#444" stroke-width="1.6"/></svg>
<svg style="left:1915px;top:981.5px" width="10" height="6" viewBox="0 0 10 6"><path d="M0.8 0.8L5 5L9.2 0.8" fill="none" stroke="#444" stroke-width="1.6"/></svg>
<div class="m" style="left:1847.6px;top:259.5px;width:64px;overflow:hidden">ing to t</div>
<div class="m" style="left:1847.6px;top:364.5px;width:64px;overflow:hidden">ode</div>
<div class="m" style="left:1847.6px;top:394.5px;width:64px;overflow:hidden">f</div>
<div class="m" style="left:1847.6px;top:424.5px;width:64px;overflow:hidden">rd dialo</div>
<div class="m" style="left:1847.6px;top:499.5px;width:64px;overflow:hidden">st row</div>
<div class="m" style="left:1847.6px;top:514.5px;width:64px;overflow:hidden">row</div>
<div class="m" style="left:1847.6px;top:589.5px;width:64px;overflow:hidden">olate</div>
<div class="m" style="left:1847.6px;top:724.5px;width:64px;overflow:hidden">(-12)</div>
<div class="m" style="left:1847.6px;top:784.5px;width:64px;overflow:hidden">(-1)</div>
<div class="m" style="left:1847.6px;top:859.5px;width:64px;overflow:hidden"> 'csv'</div>
<div class="m" style="left:1847.6px;top:874.5px;width:64px;overflow:hidden">m 'csv'</div>
<div class="m" style="left:1679.6px;top:889.5px;width:232px;overflow:hidden">SUBTRACT: shrink pattern * dr</div>
<div class="m" style="left:1679.6px;top:904.5px;width:232px;overflow:hidden">ADD: expand pattern * dropbox</div>
<div class="m" style="left:1679.6px;top:934.5px;width:232px;overflow:hidden">PERIOD: Clear</div>
<div class="m" style="left:1679.6px;top:949.5px;width:232px;overflow:hidden">INSERT: Insert</div>
<div class="m" style="left:1679.6px;top:964.5px;width:232px;overflow:hidden">DELETE: Delete</div>
<div class="m" style="left:1679.6px;top:979.5px;width:232px;overflow:hidden">PrevPage: Prev measure</div>
<div style="left:1677px;top:993.5px;width:235px;height:16px;background:#f0f0f0"></div>
<div style="left:1912px;top:993.5px;width:16px;height:16px;background:#f0f0f0"></div>
<div style="left:1695px;top:994px;width:107.5px;height:15px;background:#cdcdcd"></div>
<svg style="left:1683.5px;top:997px" width="6" height="10" viewBox="0 0 6 10"><path d="M5.2 0.8L1 5L5.2 9.2" fill="none" stroke="#444" stroke-width="1.6"/></svg>
<svg style="left:1900px;top:997px" width="6" height="10" viewBox="0 0 6 10"><path d="M0.8 0.8L5 5L0.8 9.2" fill="none" stroke="#444" stroke-width="1.6"/></svg>
<div style="left:8px;top:894px;width:1651px;height:97px;background:#dad7ca"></div>
<div style="left:1659px;top:894px;width:18px;height:97px;background:#f0f0f0"></div>
<svg style="left:1662.5px;top:980px" width="10" height="6" viewBox="0 0 10 6"><path d="M0.8 0.8L5 5L9.2 0.8" fill="none" stroke="#555" stroke-width="1.6"/></svg>
<div style="left:70.5px;top:893.6px;width:43px;height:13.4px;background:#d8d5c8;border-top:1px solid #fff;border-left:1px solid #fff;border-bottom:1px solid #b8b5a8"></div>
<div class="m" style="left:70.5px;top:893.9px;width:42px;text-align:right;font-size:13.33px;color:#111">36</div>
<div style="left:118.5px;top:893.6px;width:15.5px;height:13.8px;background:#b9b08f"></div>
<div class="m" style="left:118.5px;top:894.9px;color:#111">..</div>
<div style="left:70.5px;top:908.66px;width:43px;height:13.4px;background:#d8d5c8;border-top:1px solid #fff;border-left:1px solid #fff;border-bottom:1px solid #b8b5a8"></div>
<div class="m" style="left:70.5px;top:909.0px;width:42px;text-align:right;font-size:13.33px;color:#111">37</div>
<div class="m" style="left:118.5px;top:910.0px;color:#111">..</div>
<div style="left:70.5px;top:923.72px;width:43px;height:13.4px;background:#d8d5c8;border-top:1px solid #fff;border-left:1px solid #fff;border-bottom:1px solid #b8b5a8"></div>
<div class="m" style="left:70.5px;top:924.0px;width:42px;text-align:right;font-size:13.33px;color:#111">38</div>
<div class="m" style="left:118.5px;top:925.0px;color:#111">..</div>
<div style="left:70.5px;top:938.78px;width:43px;height:13.4px;background:#d8d5c8;border-top:1px solid #fff;border-left:1px solid #fff;border-bottom:1px solid #b8b5a8"></div>
<div class="m" style="left:70.5px;top:939.1px;width:42px;text-align:right;font-size:13.33px;color:#111">39</div>
<div class="m" style="left:118.5px;top:940.1px;color:#111">..</div>
<div style="left:70.5px;top:953.84px;width:43px;height:13.4px;background:#d8d5c8;border-top:1px solid #fff;border-left:1px solid #fff;border-bottom:1px solid #b8b5a8"></div>
<div class="m" style="left:70.5px;top:954.1px;width:42px;text-align:right;font-size:13.33px;color:#111">40</div>
<div style="left:118.5px;top:953.84px;width:15.5px;height:13.8px;background:#c9c5b0"></div>
<div class="m" style="left:118.5px;top:955.1px;color:#111">..</div>
<div style="left:70.5px;top:968.9px;width:43px;height:13.4px;background:#d8d5c8;border-top:1px solid #fff;border-left:1px solid #fff;border-bottom:1px solid #b8b5a8"></div>
<div class="m" style="left:70.5px;top:969.2px;width:42px;text-align:right;font-size:13.33px;color:#111">41</div>
<div class="m" style="left:118.5px;top:970.2px;color:#111">..</div>
<div style="left:70.5px;top:983.96px;width:43px;height:13.4px;background:#d8d5c8;border-top:1px solid #fff;border-left:1px solid #fff;border-bottom:1px solid #b8b5a8"></div>
<div class="m" style="left:70.5px;top:984.3px;width:42px;text-align:right;font-size:13.33px;color:#111">42</div>
<div class="m" style="left:118.5px;top:985.3px;color:#111">..</div>
<div style="left:113.5px;top:894px;width:2px;height:115px;background:#fff"></div>
<div style="left:115.5px;top:894px;width:2px;height:115px;background:#6a6a6a"></div>
<div style="left:8px;top:991px;width:105.5px;height:18px;background:#f0f0f0"></div>
<div style="left:117.5px;top:991px;width:1559.5px;height:18px;background:#f0f0f0"></div>
<svg style="left:15px;top:995px" width="6" height="10" viewBox="0 0 6 10"><path d="M5.2 0.8L1 5L5.2 9.2" fill="none" stroke="#bbb" stroke-width="1.4"/></svg>
<svg style="left:103.5px;top:995px" width="6" height="10" viewBox="0 0 6 10"><path d="M0.8 0.8L5 5L0.8 9.2" fill="none" stroke="#bbb" stroke-width="1.4"/></svg>
<svg style="left:123.5px;top:995px" width="6" height="10" viewBox="0 0 6 10"><path d="M5.2 0.8L1 5L5.2 9.2" fill="none" stroke="#bbb" stroke-width="1.4"/></svg>
<svg style="left:1649px;top:995px" width="6" height="10" viewBox="0 0 6 10"><path d="M0.8 0.8L5 5L0.8 9.2" fill="none" stroke="#bbb" stroke-width="1.4"/></svg>
<div style="left:8px;top:1009px;width:1920px;height:39px;background:#f0f0f0"></div>
<div style="left:8px;top:1010px;width:1920px;height:1px;background:#d7d7d7"></div>
<div style="left:8px;top:1029px;width:1920px;height:1px;background:#d7d7d7"></div>
<div style="left:113px;top:1011px;width:1px;height:18px;background:#d7d7d7"></div>
<div style="left:271px;top:1011px;width:1px;height:18px;background:#d7d7d7"></div>
<div class="t" style="left:10.3px;top:1010.5px;color:#000;font-size:12px">AudioBlock</div>
<div class="t" style="left:276.5px;top:1010.5px;color:#000">Mute</div>
<div class="t" style="left:10.3px;top:1029.5px;color:#000;font-size:11.6px">Ready to rok</div>
<div style="left:1856.5px;top:1031px;width:1px;height:17px;background:#d7d7d7"></div>
<div style="left:1892px;top:1031px;width:1px;height:17px;background:#d7d7d7"></div>
<div class="t" style="left:1861px;top:1029.5px;color:#000">NUM</div>
<div style="left:0px;top:1048px;width:1936px;height:8px;background:#1d1d1d"></div>
<div style="left:56px;top:1048px;width:344px;height:8px;background:#ececec"></div>
<div style="left:942px;top:1048px;width:48.5px;height:8px;background:#4c4c4c"></div>
<div style="left:1922.5px;top:1048px;width:1px;height:8px;background:#888"></div>
<div style="left:1928px;top:8px;width:8px;height:1048px;background:#000"></div>
<div style="left:0px;top:8px;width:8px;height:1048px;background:#000"></div>
<div class="t" style="left:1829px;top:1052.5px;color:#fff;font-size:11px;height:6px;overflow:hidden;line-height:12px">19:12</div>
<div style="left:8px;top:198px;width:1840px;height:696.5px;background:#696969"></div>
<div style="left:8px;top:198px;width:1840px;height:22.5px;background:#5b5b5b"></div>
<div style="left:8px;top:220.5px;width:8.5px;height:674px;background:#646464"></div>
<div style="left:1840px;top:220.5px;width:8px;height:674px;background:#646464"></div>
<div style="left:8px;top:890.5px;width:1840px;height:4px;background:#5e5e5e"></div>
<div class="t" style="left:17px;top:200px;color:#fff;font-weight:bold;font-size:11.8px">AudioBlock - WDE AudioBlock</div>
<svg style="left:1828px;top:205.5px" width="10" height="10" viewBox="0 0 10 10"><path d="M0.5 0.5l9 9M9.5 0.5l-9 9" stroke="#fff" stroke-width="1.1" fill="none"/></svg>
<div style="left:17.5px;top:229.5px;width:803.5px;height:22px;background:#333"></div>
<div class="t" style="left:22.3px;top:231px;color:#fff;font-size:12.1px">&lt;default&gt;</div>
<svg style="left:808px;top:238.5px" width="9" height="4.5" viewBox="0 0 9 4.5"><path d="M0 0H9L4.5 4.5z" fill="#9a9a9a"/></svg>
<div style="left:826.4px;top:229.5px;width:21.5px;height:22px;background:#6f6f6f;border:1px solid #575757;border-radius:2.5px"></div>
<div style="left:852.4px;top:229.5px;width:21px;height:22px;background:#6f6f6f;border:1px solid #575757;border-radius:2.5px"></div>
<svg style="left:832px;top:231px" width="15" height="17" viewBox="0 0 15 17"><rect x="0.5" y="0.5" width="14" height="8" fill="#8c9db4" opacity="0.75"/><rect x="0.5" y="8.5" width="14" height="7.5" fill="#8784a6" opacity="0.7"/><rect x="10" y="1" width="1.3" height="14" fill="#7a7a96" opacity="0.6"/></svg>
<svg style="left:856px;top:232px" width="12" height="16" viewBox="0 0 12 16"><path d="M2 6.5a3.6 3.6 0 0 1 7.2 0z" fill="#8878c0" opacity="0.8"/><path d="M5.6 7v6" stroke="#7c7c84" stroke-width="3" opacity="0.5"/></svg>
<div style="left:878px;top:229.5px;width:316.5px;height:22px;background:#5b5b5b;border:1px solid #3c3c3c;border-radius:2.5px;"></div><div class="t" style="left:878px;top:231.5px;width:316.5px;text-align:center;color:#fff;font-size:10px">Presets...</div>
<div style="left:1199px;top:229.5px;width:318px;height:22px;background:#5b5b5b;border:1px solid #3c3c3c;border-radius:2.5px;"></div><div class="t" style="left:1199px;top:231.5px;width:318px;text-align:center;color:#fff;font-size:10px">Help</div>
<div style="left:1521.5px;top:229.5px;width:317.5px;height:22px;background:#5b5b5b;border:1px solid #3c3c3c;border-radius:2.5px;"></div><div class="t" style="left:1521.5px;top:231.5px;width:317.5px;text-align:center;color:#fff;font-size:10px">Edit &gt;&gt;</div>
<div style="left:16.5px;top:260px;width:1823px;height:1px;background:#4e4e4e"></div>
<div style="left:16.5px;top:261px;width:1823px;height:1px;background:#727272"></div>
<div style="left:24.5px;top:277.5px;width:612.5px;height:20.5px;background:#5b5b5b;border:1px solid #3c3c3c;border-radius:2.5px;"></div><div class="t" style="left:24.5px;top:278.75px;width:612.5px;text-align:center;color:#fff;font-size:12.2px">Show / Hide Audio View</div>
<div class="t" style="left:22.3px;top:311px;color:#fff">Pattern</div>
<div class="t" style="left:132.2px;top:311px;color:#fff">Wavetable Audio</div>
<div class="t" style="left:437.8px;top:311px;color:#fff;font-size:11.4px">Offset (sec)</div>
<div class="t" style="left:525.7px;top:311px;color:#fff;font-size:11.4px">Offset (ms)</div>
<div class="t" style="left:614.5px;top:311px;color:#fff;font-size:11.4px">Vol</div>
<div class="dk" style="left:21.3px;top:338px;width:99px;height:20px;"></div>
<div class="dk" style="left:129.5px;top:338px;width:298.7px;height:20px;"></div>
<div class="dk" style="left:437.5px;top:338px;width:78.8px;height:20px;"></div>
<div class="dk" style="left:525.5px;top:338px;width:78.8px;height:20px;"></div>
<div class="t" style="left:24.8px;top:338.5px;color:#fff">Audio 00</div>
<div class="t" style="left:133.5px;top:338.5px;color:#fff;font-size:11.6px">BabyYouGotToLose</div>
<svg style="left:106.5px;top:346.5px" width="8" height="4" viewBox="0 0 8 4"><path d="M0 0H8L4.0 4z" fill="#8a8a8a"/></svg>
<svg style="left:414.5px;top:346.5px" width="8" height="4" viewBox="0 0 8 4"><path d="M0 0H8L4.0 4z" fill="#8a8a8a"/></svg>
<div class="t" style="left:437.5px;top:338px;color:#fff;width:58.6px;text-align:right">0</div>
<div class="t" style="left:525.5px;top:338px;color:#fff;width:58.6px;text-align:right">0.0</div>
<svg style="left:504.7px;top:342.5px" width="8" height="12" viewBox="0 0 8 12"><path d="M0 4.2L4 0.6L8 4.2zM0 7.8L4 11.4L8 7.8z" fill="#808080"/></svg>
<svg style="left:592.7px;top:342.5px" width="8" height="12" viewBox="0 0 8 12"><path d="M0 4.2L4 0.6L8 4.2zM0 7.8L4 11.4L8 7.8z" fill="#808080"/></svg>
<svg style="left:614.5px;top:337.5px" width="21" height="21" viewBox="0 0 21 21"><circle cx="10.5" cy="10.5" r="9.2" fill="#e2e2e2" stroke="#111" stroke-width="1.5"/><path d="M11 11.2L3.2 9.3" stroke="#111" stroke-width="1.5" fill="none"/></svg>
<div class="dk" style="left:21.3px;top:368px;width:99px;height:20px;"></div>
<div class="dk" style="left:129.5px;top:368px;width:298.7px;height:20px;"></div>
<div class="dk" style="left:437.5px;top:368px;width:78.8px;height:20px;"></div>
<div class="dk" style="left:525.5px;top:368px;width:78.8px;height:20px;"></div>
<div class="t" style="left:24.8px;top:368.5px;color:#fff">Audio 01</div>
<div class="t" style="left:133.5px;top:368.5px;color:#fff;font-size:11.85px">Martin Luther King SIlence</div>
<svg style="left:106.5px;top:376.5px" width="8" height="4" viewBox="0 0 8 4"><path d="M0 0H8L4.0 4z" fill="#8a8a8a"/></svg>
<svg style="left:414.5px;top:376.5px" width="8" height="4" viewBox="0 0 8 4"><path d="M0 0H8L4.0 4z" fill="#8a8a8a"/></svg>
<div class="t" style="left:437.5px;top:368px;color:#fff;width:58.6px;text-align:right">0</div>
<div class="t" style="left:525.5px;top:368px;color:#fff;width:58.6px;text-align:right">0.0</div>
<svg style="left:504.7px;top:372.5px" width="8" height="12" viewBox="0 0 8 12"><path d="M0 4.2L4 0.6L8 4.2zM0 7.8L4 11.4L8 7.8z" fill="#808080"/></svg>
<svg style="left:592.7px;top:372.5px" width="8" height="12" viewBox="0 0 8 12"><path d="M0 4.2L4 0.6L8 4.2zM0 7.8L4 11.4L8 7.8z" fill="#808080"/></svg>
<svg style="left:614.5px;top:367.5px" width="21" height="21" viewBox="0 0 21 21"><circle cx="10.5" cy="10.5" r="9.2" fill="#e2e2e2" stroke="#111" stroke-width="1.5"/><path d="M11 11.2L3.2 9.3" stroke="#111" stroke-width="1.5" fill="none"/></svg>
<div class="dk" style="left:21.3px;top:398px;width:99px;height:20px;"></div>
<div class="dk" style="left:129.5px;top:398px;width:298.7px;height:20px;"></div>
<div class="dk" style="left:437.5px;top:398px;width:78.8px;height:20px;"></div>
<div class="dk" style="left:525.5px;top:398px;width:78.8px;height:20px;"></div>
<svg style="left:106.5px;top:406.5px" width="8" height="4" viewBox="0 0 8 4"><path d="M0 0H8L4.0 4z" fill="#8a8a8a"/></svg>
<svg style="left:414.5px;top:406.5px" width="8" height="4" viewBox="0 0 8 4"><path d="M0 0H8L4.0 4z" fill="#8a8a8a"/></svg>
<div class="t" style="left:437.5px;top:398px;color:#fff;width:58.6px;text-align:right">0</div>
<div class="t" style="left:525.5px;top:398px;color:#fff;width:58.6px;text-align:right">0.0</div>
<svg style="left:504.7px;top:402.5px" width="8" height="12" viewBox="0 0 8 12"><path d="M0 4.2L4 0.6L8 4.2zM0 7.8L4 11.4L8 7.8z" fill="#808080"/></svg>
<svg style="left:592.7px;top:402.5px" width="8" height="12" viewBox="0 0 8 12"><path d="M0 4.2L4 0.6L8 4.2zM0 7.8L4 11.4L8 7.8z" fill="#808080"/></svg>
<svg style="left:614.5px;top:397.5px" width="21" height="21" viewBox="0 0 21 21"><circle cx="10.5" cy="10.5" r="9.2" fill="#e2e2e2" stroke="#111" stroke-width="1.5"/><path d="M11 11.2L3.2 9.3" stroke="#111" stroke-width="1.5" fill="none"/></svg>
<div class="dk" style="left:21.3px;top:428px;width:99px;height:20px;"></div>
<div class="dk" style="left:129.5px;top:428px;width:298.7px;height:20px;"></div>
<div class="dk" style="left:437.5px;top:428px;width:78.8px;height:20px;"></div>
<div class="dk" style="left:525.5px;top:428px;width:78.8px;height:20px;"></div>
<svg style="left:106.5px;top:436.5px" width="8" height="4" viewBox="0 0 8 4"><path d="M0 0H8L4.0 4z" fill="#8a8a8a"/></svg>
<svg style="left:414.5px;top:436.5px" width="8" height="4" viewBox="0 0 8 4"><path d="M0 0H8L4.0 4z" fill="#8a8a8a"/></svg>
<div class="t" style="left:437.5px;top:428px;color:#fff;width:58.6px;text-align:right">0</div>
<div class="t" style="left:525.5px;top:428px;color:#fff;width:58.6px;text-align:right">0.0</div>
<svg style="left:504.7px;top:432.5px" width="8" height="12" viewBox="0 0 8 12"><path d="M0 4.2L4 0.6L8 4.2zM0 7.8L4 11.4L8 7.8z" fill="#808080"/></svg>
<svg style="left:592.7px;top:432.5px" width="8" height="12" viewBox="0 0 8 12"><path d="M0 4.2L4 0.6L8 4.2zM0 7.8L4 11.4L8 7.8z" fill="#808080"/></svg>
<svg style="left:614.5px;top:427.5px" width="21" height="21" viewBox="0 0 21 21"><circle cx="10.5" cy="10.5" r="9.2" fill="#e2e2e2" stroke="#111" stroke-width="1.5"/><path d="M11 11.2L3.2 9.3" stroke="#111" stroke-width="1.5" fill="none"/></svg>
<div class="dk" style="left:21.3px;top:458px;width:99px;height:20px;"></div>
<div class="dk" style="left:129.5px;top:458px;width:298.7px;height:20px;"></div>
<div class="dk" style="left:437.5px;top:458px;width:78.8px;height:20px;"></div>
<div class="dk" style="left:525.5px;top:458px;width:78.8px;height:20px;"></div>
<svg style="left:106.5px;top:466.5px" width="8" height="4" viewBox="0 0 8 4"><path d="M0 0H8L4.0 4z" fill="#8a8a8a"/></svg>
<svg style="left:414.5px;top:466.5px" width="8" height="4" viewBox="0 0 8 4"><path d="M0 0H8L4.0 4z" fill="#8a8a8a"/></svg>
<div class="t" style="left:437.5px;top:458px;color:#fff;width:58.6px;text-align:right">0</div>
<div class="t" style="left:525.5px;top:458px;color:#fff;width:58.6px;text-align:right">0.0</div>
<svg style="left:504.7px;top:462.5px" width="8" height="12" viewBox="0 0 8 12"><path d="M0 4.2L4 0.6L8 4.2zM0 7.8L4 11.4L8 7.8z" fill="#808080"/></svg>
<svg style="left:592.7px;top:462.5px" width="8" height="12" viewBox="0 0 8 12"><path d="M0 4.2L4 0.6L8 4.2zM0 7.8L4 11.4L8 7.8z" fill="#808080"/></svg>
<svg style="left:614.5px;top:457.5px" width="21" height="21" viewBox="0 0 21 21"><circle cx="10.5" cy="10.5" r="9.2" fill="#e2e2e2" stroke="#111" stroke-width="1.5"/><path d="M11 11.2L3.2 9.3" stroke="#111" stroke-width="1.5" fill="none"/></svg>
<div class="dk" style="left:21.3px;top:488px;width:99px;height:20px;"></div>
<div class="dk" style="left:129.5px;top:488px;width:298.7px;height:20px;"></div>
<div class="dk" style="left:437.5px;top:488px;width:78.8px;height:20px;"></div>
<div class="dk" style="left:525.5px;top:488px;width:78.8px;height:20px;"></div>
<svg style="left:106.5px;top:496.5px" width="8" height="4" viewBox="0 0 8 4"><path d="M0 0H8L4.0 4z" fill="#8a8a8a"/></svg>
<svg style="left:414.5px;top:496.5px" width="8" height="4" viewBox="0 0 8 4"><path d="M0 0H8L4.0 4z" fill="#8a8a8a"/></svg>
<div class="t" style="left:437.5px;top:488px;color:#fff;width:58.6px;text-align:right">0</div>
<div class="t" style="left:525.5px;top:488px;color:#fff;width:58.6px;text-align:right">0.0</div>
<svg style="left:504.7px;top:492.5px" width="8" height="12" viewBox="0 0 8 12"><path d="M0 4.2L4 0.6L8 4.2zM0 7.8L4 11.4L8 7.8z" fill="#808080"/></svg>
<svg style="left:592.7px;top:492.5px" width="8" height="12" viewBox="0 0 8 12"><path d="M0 4.2L4 0.6L8 4.2zM0 7.8L4 11.4L8 7.8z" fill="#808080"/></svg>
<svg style="left:614.5px;top:487.5px" width="21" height="21" viewBox="0 0 21 21"><circle cx="10.5" cy="10.5" r="9.2" fill="#e2e2e2" stroke="#111" stroke-width="1.5"/><path d="M11 11.2L3.2 9.3" stroke="#111" stroke-width="1.5" fill="none"/></svg>
<div class="dk" style="left:21.3px;top:518px;width:99px;height:20px;"></div>
<div class="dk" style="left:129.5px;top:518px;width:298.7px;height:20px;"></div>
<div class="dk" style="left:437.5px;top:518px;width:78.8px;height:20px;"></div>
<div class="dk" style="left:525.5px;top:518px;width:78.8px;height:20px;"></div>
<svg style="left:106.5px;top:526.5px" width="8" height="4" viewBox="0 0 8 4"><path d="M0 0H8L4.0 4z" fill="#8a8a8a"/></svg>
<svg style="left:414.5px;top:526.5px" width="8" height="4" viewBox="0 0 8 4"><path d="M0 0H8L4.0 4z" fill="#8a8a8a"/></svg>
<div class="t" style="left:437.5px;top:518px;color:#fff;width:58.6px;text-align:right">0</div>
<div class="t" style="left:525.5px;top:518px;color:#fff;width:58.6px;text-align:right">0.0</div>
<svg style="left:504.7px;top:522.5px" width="8" height="12" viewBox="0 0 8 12"><path d="M0 4.2L4 0.6L8 4.2zM0 7.8L4 11.4L8 7.8z" fill="#808080"/></svg>
<svg style="left:592.7px;top:522.5px" width="8" height="12" viewBox="0 0 8 12"><path d="M0 4.2L4 0.6L8 4.2zM0 7.8L4 11.4L8 7.8z" fill="#808080"/></svg>
<svg style="left:614.5px;top:517.5px" width="21" height="21" viewBox="0 0 21 21"><circle cx="10.5" cy="10.5" r="9.2" fill="#e2e2e2" stroke="#111" stroke-width="1.5"/><path d="M11 11.2L3.2 9.3" stroke="#111" stroke-width="1.5" fill="none"/></svg>
<div class="dk" style="left:21.3px;top:548px;width:99px;height:20px;"></div>
<div class="dk" style="left:129.5px;top:548px;width:298.7px;height:20px;"></div>
<div class="dk" style="left:437.5px;top:548px;width:78.8px;height:20px;"></div>
<div class="dk" style="left:525.5px;top:548px;width:78.8px;height:20px;"></div>
<svg style="left:106.5px;top:556.5px" width="8" height="4" viewBox="0 0 8 4"><path d="M0 0H8L4.0 4z" fill="#8a8a8a"/></svg>
<svg style="left:414.5px;top:556.5px" width="8" height="4" viewBox="0 0 8 4"><path d="M0 0H8L4.0 4z" fill="#8a8a8a"/></svg>
<div class="t" style="left:437.5px;top:548px;color:#fff;width:58.6px;text-align:right">0</div>
<div class="t" style="left:525.5px;top:548px;color:#fff;width:58.6px;text-align:right">0.0</div>
<svg style="left:504.7px;top:552.5px" width="8" height="12" viewBox="0 0 8 12"><path d="M0 4.2L4 0.6L8 4.2zM0 7.8L4 11.4L8 7.8z" fill="#808080"/></svg>
<svg style="left:592.7px;top:552.5px" width="8" height="12" viewBox="0 0 8 12"><path d="M0 4.2L4 0.6L8 4.2zM0 7.8L4 11.4L8 7.8z" fill="#808080"/></svg>
<svg style="left:614.5px;top:547.5px" width="21" height="21" viewBox="0 0 21 21"><circle cx="10.5" cy="10.5" r="9.2" fill="#e2e2e2" stroke="#111" stroke-width="1.5"/><path d="M11 11.2L3.2 9.3" stroke="#111" stroke-width="1.5" fill="none"/></svg>
<div class="dk" style="left:21.3px;top:578px;width:99px;height:20px;"></div>
<div class="dk" style="left:129.5px;top:578px;width:298.7px;height:20px;"></div>
<div class="dk" style="left:437.5px;top:578px;width:78.8px;height:20px;"></div>
<div class="dk" style="left:525.5px;top:578px;width:78.8px;height:20px;"></div>
<svg style="left:106.5px;top:586.5px" width="8" height="4" viewBox="0 0 8 4"><path d="M0 0H8L4.0 4z" fill="#8a8a8a"/></svg>
<svg style="left:414.5px;top:586.5px" width="8" height="4" viewBox="0 0 8 4"><path d="M0 0H8L4.0 4z" fill="#8a8a8a"/></svg>
<div class="t" style="left:437.5px;top:578px;color:#fff;width:58.6px;text-align:right">0</div>
<div class="t" style="left:525.5px;top:578px;color:#fff;width:58.6px;text-align:right">0.0</div>
<svg style="left:504.7px;top:582.5px" width="8" height="12" viewBox="0 0 8 12"><path d="M0 4.2L4 0.6L8 4.2zM0 7.8L4 11.4L8 7.8z" fill="#808080"/></svg>
<svg style="left:592.7px;top:582.5px" width="8" height="12" viewBox="0 0 8 12"><path d="M0 4.2L4 0.6L8 4.2zM0 7.8L4 11.4L8 7.8z" fill="#808080"/></svg>
<svg style="left:614.5px;top:577.5px" width="21" height="21" viewBox="0 0 21 21"><circle cx="10.5" cy="10.5" r="9.2" fill="#e2e2e2" stroke="#111" stroke-width="1.5"/><path d="M11 11.2L3.2 9.3" stroke="#111" stroke-width="1.5" fill="none"/></svg>
<div class="dk" style="left:21.3px;top:608px;width:99px;height:20px;"></div>
<div class="dk" style="left:129.5px;top:608px;width:298.7px;height:20px;"></div>
<div class="dk" style="left:437.5px;top:608px;width:78.8px;height:20px;"></div>
<div class="dk" style="left:525.5px;top:608px;width:78.8px;height:20px;"></div>
<svg style="left:106.5px;top:616.5px" width="8" height="4" viewBox="0 0 8 4"><path d="M0 0H8L4.0 4z" fill="#8a8a8a"/></svg>
<svg style="left:414.5px;top:616.5px" width="8" height="4" viewBox="0 0 8 4"><path d="M0 0H8L4.0 4z" fill="#8a8a8a"/></svg>
<div class="t" style="left:437.5px;top:608px;color:#fff;width:58.6px;text-align:right">0</div>
<div class="t" style="left:525.5px;top:608px;color:#fff;width:58.6px;text-align:right">0.0</div>
<svg style="left:504.7px;top:612.5px" width="8" height="12" viewBox="0 0 8 12"><path d="M0 4.2L4 0.6L8 4.2zM0 7.8L4 11.4L8 7.8z" fill="#808080"/></svg>
<svg style="left:592.7px;top:612.5px" width="8" height="12" viewBox="0 0 8 12"><path d="M0 4.2L4 0.6L8 4.2zM0 7.8L4 11.4L8 7.8z" fill="#808080"/></svg>
<svg style="left:614.5px;top:607.5px" width="21" height="21" viewBox="0 0 21 21"><circle cx="10.5" cy="10.5" r="9.2" fill="#e2e2e2" stroke="#111" stroke-width="1.5"/><path d="M11 11.2L3.2 9.3" stroke="#111" stroke-width="1.5" fill="none"/></svg>
<div class="dk" style="left:21.3px;top:638px;width:99px;height:20px;"></div>
<div class="dk" style="left:129.5px;top:638px;width:298.7px;height:20px;"></div>
<div class="dk" style="left:437.5px;top:638px;width:78.8px;height:20px;"></div>
<div class="dk" style="left:525.5px;top:638px;width:78.8px;height:20px;"></div>
<svg style="left:106.5px;top:646.5px" width="8" height="4" viewBox="0 0 8 4"><path d="M0 0H8L4.0 4z" fill="#8a8a8a"/></svg>
<svg style="left:414.5px;top:646.5px" width="8" height="4" viewBox="0 0 8 4"><path d="M0 0H8L4.0 4z" fill="#8a8a8a"/></svg>
<div class="t" style="left:437.5px;top:638px;color:#fff;width:58.6px;text-align:right">0</div>
<div class="t" style="left:525.5px;top:638px;color:#fff;width:58.6px;text-align:right">0.0</div>
<svg style="left:504.7px;top:642.5px" width="8" height="12" viewBox="0 0 8 12"><path d="M0 4.2L4 0.6L8 4.2zM0 7.8L4 11.4L8 7.8z" fill="#808080"/></svg>
<svg style="left:592.7px;top:642.5px" width="8" height="12" viewBox="0 0 8 12"><path d="M0 4.2L4 0.6L8 4.2zM0 7.8L4 11.4L8 7.8z" fill="#808080"/></svg>
<svg style="left:614.5px;top:637.5px" width="21" height="21" viewBox="0 0 21 21"><circle cx="10.5" cy="10.5" r="9.2" fill="#e2e2e2" stroke="#111" stroke-width="1.5"/><path d="M11 11.2L3.2 9.3" stroke="#111" stroke-width="1.5" fill="none"/></svg>
<div class="dk" style="left:21.3px;top:668px;width:99px;height:20px;"></div>
<div class="dk" style="left:129.5px;top:668px;width:298.7px;height:20px;"></div>
<div class="dk" style="left:437.5px;top:668px;width:78.8px;height:20px;"></div>
<div class="dk" style="left:525.5px;top:668px;width:78.8px;height:20px;"></div>
<svg style="left:106.5px;top:676.5px" width="8" height="4" viewBox="0 0 8 4"><path d="M0 0H8L4.0 4z" fill="#8a8a8a"/></svg>
<svg style="left:414.5px;top:676.5px" width="8" height="4" viewBox="0 0 8 4"><path d="M0 0H8L4.0 4z" fill="#8a8a8a"/></svg>
<div class="t" style="left:437.5px;top:668px;color:#fff;width:58.6px;text-align:right">0</div>
<div class="t" style="left:525.5px;top:668px;color:#fff;width:58.6px;text-align:right">0.0</div>
<svg style="left:504.7px;top:672.5px" width="8" height="12" viewBox="0 0 8 12"><path d="M0 4.2L4 0.6L8 4.2zM0 7.8L4 11.4L8 7.8z" fill="#808080"/></svg>
<svg style="left:592.7px;top:672.5px" width="8" height="12" viewBox="0 0 8 12"><path d="M0 4.2L4 0.6L8 4.2zM0 7.8L4 11.4L8 7.8z" fill="#808080"/></svg>
<svg style="left:614.5px;top:667.5px" width="21" height="21" viewBox="0 0 21 21"><circle cx="10.5" cy="10.5" r="9.2" fill="#e2e2e2" stroke="#111" stroke-width="1.5"/><path d="M11 11.2L3.2 9.3" stroke="#111" stroke-width="1.5" fill="none"/></svg>
<div class="dk" style="left:21.3px;top:698px;width:99px;height:20px;"></div>
<div class="dk" style="left:129.5px;top:698px;width:298.7px;height:20px;"></div>
<div class="dk" style="left:437.5px;top:698px;width:78.8px;height:20px;"></div>
<div class="dk" style="left:525.5px;top:698px;width:78.8px;height:20px;"></div>
<svg style="left:106.5px;top:706.5px" width="8" height="4" viewBox="0 0 8 4"><path d="M0 0H8L4.0 4z" fill="#8a8a8a"/></svg>
<svg style="left:414.5px;top:706.5px" width="8" height="4" viewBox="0 0 8 4"><path d="M0 0H8L4.0 4z" fill="#8a8a8a"/></svg>
<div class="t" style="left:437.5px;top:698px;color:#fff;width:58.6px;text-align:right">0</div>
<div class="t" style="left:525.5px;top:698px;color:#fff;width:58.6px;text-align:right">0.0</div>
<svg style="left:504.7px;top:702.5px" width="8" height="12" viewBox="0 0 8 12"><path d="M0 4.2L4 0.6L8 4.2zM0 7.8L4 11.4L8 7.8z" fill="#808080"/></svg>
<svg style="left:592.7px;top:702.5px" width="8" height="12" viewBox="0 0 8 12"><path d="M0 4.2L4 0.6L8 4.2zM0 7.8L4 11.4L8 7.8z" fill="#808080"/></svg>
<svg style="left:614.5px;top:697.5px" width="21" height="21" viewBox="0 0 21 21"><circle cx="10.5" cy="10.5" r="9.2" fill="#e2e2e2" stroke="#111" stroke-width="1.5"/><path d="M11 11.2L3.2 9.3" stroke="#111" stroke-width="1.5" fill="none"/></svg>
<div class="dk" style="left:21.3px;top:728px;width:99px;height:20px;"></div>
<div class="dk" style="left:129.5px;top:728px;width:298.7px;height:20px;"></div>
<div class="dk" style="left:437.5px;top:728px;width:78.8px;height:20px;"></div>
<div class="dk" style="left:525.5px;top:728px;width:78.8px;height:20px;"></div>
<svg style="left:106.5px;top:736.5px" width="8" height="4" viewBox="0 0 8 4"><path d="M0 0H8L4.0 4z" fill="#8a8a8a"/></svg>
<svg style="left:414.5px;top:736.5px" width="8" height="4" viewBox="0 0 8 4"><path d="M0 0H8L4.0 4z" fill="#8a8a8a"/></svg>
<div class="t" style="left:437.5px;top:728px;color:#fff;width:58.6px;text-align:right">0</div>
<div class="t" style="left:525.5px;top:728px;color:#fff;width:58.6px;text-align:right">0.0</div>
<svg style="left:504.7px;top:732.5px" width="8" height="12" viewBox="0 0 8 12"><path d="M0 4.2L4 0.6L8 4.2zM0 7.8L4 11.4L8 7.8z" fill="#808080"/></svg>
<svg style="left:592.7px;top:732.5px" width="8" height="12" viewBox="0 0 8 12"><path d="M0 4.2L4 0.6L8 4.2zM0 7.8L4 11.4L8 7.8z" fill="#808080"/></svg>
<svg style="left:614.5px;top:727.5px" width="21" height="21" viewBox="0 0 21 21"><circle cx="10.5" cy="10.5" r="9.2" fill="#e2e2e2" stroke="#111" stroke-width="1.5"/><path d="M11 11.2L3.2 9.3" stroke="#111" stroke-width="1.5" fill="none"/></svg>
<div class="dk" style="left:21.3px;top:758px;width:99px;height:20px;"></div>
<div class="dk" style="left:129.5px;top:758px;width:298.7px;height:20px;"></div>
<div class="dk" style="left:437.5px;top:758px;width:78.8px;height:20px;"></div>
<div class="dk" style="left:525.5px;top:758px;width:78.8px;height:20px;"></div>
<svg style="left:106.5px;top:766.5px" width="8" height="4" viewBox="0 0 8 4"><path d="M0 0H8L4.0 4z" fill="#8a8a8a"/></svg>
<svg style="left:414.5px;top:766.5px" width="8" height="4" viewBox="0 0 8 4"><path d="M0 0H8L4.0 4z" fill="#8a8a8a"/></svg>
<div class="t" style="left:437.5px;top:758px;color:#fff;width:58.6px;text-align:right">0</div>
<div class="t" style="left:525.5px;top:758px;color:#fff;width:58.6px;text-align:right">0.0</div>
<svg style="left:504.7px;top:762.5px" width="8" height="12" viewBox="0 0 8 12"><path d="M0 4.2L4 0.6L8 4.2zM0 7.8L4 11.4L8 7.8z" fill="#808080"/></svg>
<svg style="left:592.7px;top:762.5px" width="8" height="12" viewBox="0 0 8 12"><path d="M0 4.2L4 0.6L8 4.2zM0 7.8L4 11.4L8 7.8z" fill="#808080"/></svg>
<svg style="left:614.5px;top:757.5px" width="21" height="21" viewBox="0 0 21 21"><circle cx="10.5" cy="10.5" r="9.2" fill="#e2e2e2" stroke="#111" stroke-width="1.5"/><path d="M11 11.2L3.2 9.3" stroke="#111" stroke-width="1.5" fill="none"/></svg>
<div class="dk" style="left:21.3px;top:788px;width:99px;height:20px;"></div>
<div class="dk" style="left:129.5px;top:788px;width:298.7px;height:20px;"></div>
<div class="dk" style="left:437.5px;top:788px;width:78.8px;height:20px;"></div>
<div class="dk" style="left:525.5px;top:788px;width:78.8px;height:20px;"></div>
<svg style="left:106.5px;top:796.5px" width="8" height="4" viewBox="0 0 8 4"><path d="M0 0H8L4.0 4z" fill="#8a8a8a"/></svg>
<svg style="left:414.5px;top:796.5px" width="8" height="4" viewBox="0 0 8 4"><path d="M0 0H8L4.0 4z" fill="#8a8a8a"/></svg>
<div class="t" style="left:437.5px;top:788px;color:#fff;width:58.6px;text-align:right">0</div>
<div class="t" style="left:525.5px;top:788px;color:#fff;width:58.6px;text-align:right">0.0</div>
<svg style="left:504.7px;top:792.5px" width="8" height="12" viewBox="0 0 8 12"><path d="M0 4.2L4 0.6L8 4.2zM0 7.8L4 11.4L8 7.8z" fill="#808080"/></svg>
<svg style="left:592.7px;top:792.5px" width="8" height="12" viewBox="0 0 8 12"><path d="M0 4.2L4 0.6L8 4.2zM0 7.8L4 11.4L8 7.8z" fill="#808080"/></svg>
<svg style="left:614.5px;top:787.5px" width="21" height="21" viewBox="0 0 21 21"><circle cx="10.5" cy="10.5" r="9.2" fill="#e2e2e2" stroke="#111" stroke-width="1.5"/><path d="M11 11.2L3.2 9.3" stroke="#111" stroke-width="1.5" fill="none"/></svg>
<div class="t" style="left:17.3px;top:868.5px;color:#fff">Mute</div>
<div style="left:107px;top:871.5px;width:1641.5px;height:13.5px;background:#333;border-radius:3px"></div>
<div style="left:107.5px;top:872px;width:819.5px;height:12px;background:#cfcfcf;border-radius:3px"></div>
<div class="t" style="left:1753.3px;top:868.5px;color:#fff">No</div>
<div style="left:665px;top:281px;width:31.5px;height:29.6px;background:#5f5f5f;border:1px solid #3c3c3c"></div>
<svg style="left:673px;top:289px" width="17" height="17" viewBox="0 0 17 17"><path d="M12.6 3.5A6.2 6.2 0 1 1 4.6 3.3" fill="none" stroke="#fff" stroke-width="2.1"/><path d="M2.2 2.6H6.3V6.4" fill="none" stroke="#fff" stroke-width="1.6"/></svg>
<div style="left:705px;top:288.1px;width:1119.5px;height:2.4px;background:#3a3a3a"></div>
<div style="left:705px;top:314.7px;width:1119.5px;height:2.4px;background:#3a3a3a"></div>
<div style="left:1820.5px;top:279.5px;width:9px;height:18.5px;background:#b4b4b4;border-radius:1.5px"></div>
<div style="left:1820.5px;top:305.5px;width:9px;height:18.5px;background:#b4b4b4;border-radius:1.5px"></div>
<div style="left:665.5px;top:329px;width:1px;height:33.5px;background:#a8a8a8"></div>
<div class="t" style="left:671.2px;top:336.5px;color:#3c3c3c;font-size:12.2px">000:000</div>
<div style="left:794.4px;top:329px;width:1px;height:33.5px;background:#a8a8a8"></div>
<div class="t" style="left:800.1px;top:336.5px;color:#3c3c3c;font-size:12.2px">007:610</div>
<div style="left:923.3px;top:329px;width:1px;height:33.5px;background:#a8a8a8"></div>
<div class="t" style="left:929.0px;top:336.5px;color:#3c3c3c;font-size:12.2px">015:221</div>
<div style="left:1052.2px;top:329px;width:1px;height:33.5px;background:#a8a8a8"></div>
<div class="t" style="left:1057.9px;top:336.5px;color:#3c3c3c;font-size:12.2px">022:832</div>
<div style="left:1181.1px;top:329px;width:1px;height:33.5px;background:#a8a8a8"></div>
<div class="t" style="left:1186.8px;top:336.5px;color:#3c3c3c;font-size:12.2px">030:443</div>
<div style="left:1310.0px;top:329px;width:1px;height:33.5px;background:#a8a8a8"></div>
<div class="t" style="left:1315.7px;top:336.5px;color:#3c3c3c;font-size:12.2px">038:054</div>
<div style="left:1438.9px;top:329px;width:1px;height:33.5px;background:#a8a8a8"></div>
<div class="t" style="left:1444.6000000000001px;top:336.5px;color:#3c3c3c;font-size:12.2px">045:665</div>
<div style="left:1567.8000000000002px;top:329px;width:1px;height:33.5px;background:#a8a8a8"></div>
<div class="t" style="left:1573.5000000000002px;top:336.5px;color:#3c3c3c;font-size:12.2px">053:277</div>
<div style="left:665px;top:362px;width:999px;height:299px;background:#c6bea7"></div>
<svg style="left:0;top:0" width="1936" height="1056" viewBox="0 0 1936 1056"><rect x="665" y="362" width="999" height="1" fill="#ece8dc"/><rect x="665" y="362" width="1" height="299" fill="#ece8dc"/><rect x="665" y="510.5" width="999" height="1.2" fill="#151515"/><rect x="665" y="511.7" width="999" height="1" fill="#ece8dc"/><rect x="665" y="660" width="999" height="1.2" fill="#3a3a36"/><rect x="1663" y="362" width="1" height="299" fill="#3a3a36"/><rect x="665" y="661" width="1000" height="1" fill="#dcd8cc"/><rect x="1664" y="362" width="1" height="300" fill="#dcd8cc"/><rect x="666" y="398.9" width="997" height="1" fill="#4a4640"/><path d="M667.0 399.4L667.0 398.4L668.5 391.4L670.0 383.4L671.0 380.4L672.5 387.4L674.0 381.4L675.0 380.4L676.5 387.4L678.0 394.4L679.0 397.9L685.5 398.4L687.0 389.4L688.0 382.4L689.5 393.4L691.0 395.4L692.0 396.4L694.0 387.4L695.2 379.4L696.5 391.4L697.5 393.4L699.0 389.4L700.4 382.4L702.0 391.4L703.5 389.4L704.5 393.4L706.0 391.4L707.7 380.4L709.0 391.4L710.5 393.4L711.5 389.4L713.0 391.4L714.3 386.4L716.0 393.4L717.5 397.4L718.0 398.4L718.0 400.4L717.5 401.4L716.0 404.4L714.3 411.4L713.0 407.4L711.5 404.4L710.5 405.4L709.0 407.4L707.7 423.4L706.0 407.4L704.5 403.4L703.5 405.4L702.0 409.4L700.4 421.4L699.0 411.4L697.5 404.4L696.5 405.4L695.2 416.4L694.0 409.4L692.0 402.4L691.0 405.4L689.5 407.4L688.0 423.4L687.0 411.4L685.5 400.4L679.0 400.9L678.0 403.4L676.5 409.4L675.0 416.4L674.0 413.4L672.5 413.4L671.0 418.4L670.0 419.4L668.5 409.4L667.0 400.4Z" fill="#ff0000" stroke="#b31212" stroke-width="0.8" stroke-linejoin="round"/><rect x="666" y="473.7" width="997" height="1" fill="#4a4640"/><path d="M667.0 474.2L667.0 473.2L668.5 466.2L670.0 458.2L671.0 455.2L672.5 462.2L674.0 456.2L675.0 455.2L676.5 462.2L678.0 469.2L679.0 472.7L685.5 473.2L687.0 464.2L688.0 457.2L689.5 468.2L691.0 470.2L692.0 471.2L694.0 462.2L695.2 454.2L696.5 466.2L697.5 468.2L699.0 464.2L700.4 457.2L702.0 466.2L703.5 464.2L704.5 468.2L706.0 466.2L707.7 455.2L709.0 466.2L710.5 468.2L711.5 464.2L713.0 466.2L714.3 461.2L716.0 468.2L717.5 472.2L718.0 473.2L718.0 475.2L717.5 476.2L716.0 479.2L714.3 486.2L713.0 482.2L711.5 479.2L710.5 480.2L709.0 482.2L707.7 498.2L706.0 482.2L704.5 478.2L703.5 480.2L702.0 484.2L700.4 496.2L699.0 486.2L697.5 479.2L696.5 480.2L695.2 491.2L694.0 484.2L692.0 477.2L691.0 480.2L689.5 482.2L688.0 498.2L687.0 486.2L685.5 475.2L679.0 475.7L678.0 478.2L676.5 484.2L675.0 491.2L674.0 488.2L672.5 488.2L671.0 493.2L670.0 494.2L668.5 484.2L667.0 475.2Z" fill="#ff0000" stroke="#b31212" stroke-width="0.8" stroke-linejoin="round"/><path id="bw" d="M665.5 549.3L665.5 548.3L667.0 540.4L668.3 519.4L669.7 521.8L671.3 538.1L672.8 526.2L673.9 526.9L675.1 526.2L676.7 540.0L678.0 518.5L678.9 518.2L680.4 538.9L681.7 519.3L682.8 520.9L683.9 520.7L685.5 539.9L686.9 524.1L688.2 524.0L689.8 540.0L691.3 520.8L692.7 519.0L694.1 520.7L695.8 535.6L696.8 518.7L697.9 518.4L698.9 521.1L700.2 533.8L701.4 519.5L702.6 520.6L703.7 520.9L705.1 541.9L706.6 517.2L708.0 518.4L709.3 518.2L710.9 534.0L712.1 519.5L712.9 518.0L714.5 536.3L715.5 516.2L716.5 518.3L717.9 531.8L719.4 526.2L720.9 536.2L722.3 541.2L724.5 548.3L726.0 548.4L727.5 548.3L729.0 548.3L730.5 548.3L732.0 548.3L733.5 548.3L735.0 545.9L735.5 548.0L737.0 548.0L738.5 532.3L739.8 518.5L741.3 521.5L742.8 522.6L744.5 539.3L745.9 518.2L747.5 517.0L749.1 520.0L751.3 541.2L752.4 520.5L753.6 522.4L754.7 525.9L756.1 538.5L757.4 529.8L758.6 531.2L760.5 540.5L761.8 526.2L762.6 527.5L763.8 540.2L765.2 529.1L766.2 529.9L767.5 540.9L768.8 529.9L770.1 530.7L771.3 530.0L773.2 538.2L774.5 530.7L775.4 530.2L776.6 543.2L777.7 528.6L779.2 529.0L780.8 527.7L782.9 532.0L784.1 522.0L784.9 521.8L786.1 531.4L787.2 518.5L788.2 519.8L789.5 531.0L790.7 523.7L791.6 524.5L792.9 537.4L794.0 518.7L795.0 522.5L796.6 538.9L797.7 527.0L799.1 527.3L800.7 543.4L801.9 532.8L803.4 534.8L804.8 535.3L806.4 541.7L807.8 536.6L809.0 538.4L810.6 545.6L811.8 545.4L813.3 548.4L814.9 548.5L816.8 548.3L818.3 548.3L819.8 548.3L821.3 548.3L822.8 521.6L823.3 531.3L824.6 518.2L825.9 519.8L827.2 520.8L829.0 536.1L830.1 523.9L831.2 524.5L832.2 523.4L833.6 534.1L835.0 524.2L836.1 526.5L837.3 526.0L838.6 537.2L839.7 526.5L840.9 526.6L842.7 536.6L843.7 523.4L844.8 524.3L846.4 537.0L847.6 526.9L848.7 523.7L849.7 526.0L851.1 533.6L852.6 523.8L853.7 524.8L855.4 532.9L856.7 520.5L857.5 521.0L858.6 536.5L859.6 524.4L861.1 524.9L862.7 524.3L864.4 531.4L865.6 521.7L867.1 521.4L868.6 518.6L870.8 532.4L871.8 517.1L873.2 517.3L874.5 518.0L876.4 535.9L877.7 515.2L879.0 518.6L880.9 538.1L882.0 517.2L883.1 519.8L884.6 533.9L885.8 521.8L887.1 523.2L888.8 532.9L890.0 523.6L891.6 519.0L893.1 516.0L895.3 534.9L896.8 518.8L898.0 517.5L899.6 532.3L901.0 520.3L902.2 521.8L903.6 531.9L904.8 525.4L906.0 531.7L907.4 543.3L908.8 544.5L910.1 548.2L911.6 548.2L913.1 548.2L914.6 548.3L916.1 548.3L917.6 548.3L919.1 548.3L920.6 548.3L922.1 548.3L923.6 548.4L925.1 548.4L926.6 548.4L928.1 548.4L929.6 548.4L931.1 548.4L932.6 548.4L934.1 548.5L935.6 535.3L936.1 529.2L936.6 525.6L937.1 529.2L938.4 518.7L939.8 521.6L941.9 525.8L943.3 525.3L944.7 523.6L946.2 522.7L948.2 527.5L949.2 526.1L950.1 528.0L951.3 527.6L952.5 524.6L953.3 526.0L954.7 527.0L956.0 537.4L957.0 537.9L958.1 528.1L959.7 518.9L960.2 522.3L960.7 525.6L961.2 531.5L961.7 536.9L962.2 536.8L962.7 529.2L963.2 523.8L963.7 519.6L964.2 518.0L964.7 517.2L965.2 516.3L965.7 513.5L966.2 515.1L966.7 516.4L967.2 516.9L967.7 522.9L968.2 535.4L968.7 541.2L969.2 542.4L969.7 542.6L970.2 543.5L970.7 543.9L971.2 544.9L971.7 545.6L972.2 548.0L973.7 548.3L975.2 548.3L976.7 548.3L978.2 548.4L979.7 548.4L981.2 548.4L982.7 548.4L984.2 548.4L985.7 548.4L987.2 548.4L988.7 548.4L990.2 548.5L991.7 548.4L993.2 525.5L993.7 525.3L994.2 534.7L995.5 521.6L996.7 521.6L997.9 520.2L999.6 539.1L1000.7 521.2L1001.9 521.5L1003.4 533.7L1004.7 526.2L1005.9 525.8L1007.1 527.9L1008.8 539.4L1009.9 528.3L1010.9 528.2L1012.5 534.3L1013.6 523.6L1015.0 523.5L1016.8 538.5L1017.8 525.5L1019.0 525.1L1020.1 524.0L1021.6 537.1L1022.9 524.0L1023.7 522.2L1024.8 532.7L1025.8 524.0L1026.8 528.4L1027.9 534.3L1029.5 537.5L1031.0 528.3L1032.3 524.5L1033.7 525.5L1035.3 537.6L1036.8 523.1L1038.0 524.9L1039.5 538.4L1041.0 540.5L1042.2 536.2L1043.5 531.7L1045.4 531.5L1045.9 537.8L1046.4 536.8L1046.9 533.7L1047.4 529.3L1047.9 531.7L1048.4 536.3L1048.9 540.4L1049.4 539.6L1049.9 537.5L1050.4 537.5L1050.9 538.3L1051.4 539.9L1051.9 540.8L1052.4 541.7L1052.9 543.3L1053.4 544.2L1053.9 545.6L1054.4 548.2L1055.9 548.3L1057.4 548.4L1058.9 548.3L1060.4 548.4L1061.9 548.4L1063.4 548.4L1064.9 548.4L1066.4 548.4L1067.9 548.4L1069.4 548.5L1070.9 548.5L1072.4 548.3L1073.9 519.5L1074.4 533.0L1075.4 518.5L1076.8 520.3L1078.1 522.1L1079.9 533.5L1081.3 525.0L1082.7 525.3L1084.0 524.6L1085.6 534.5L1087.0 526.6L1088.4 524.7L1089.8 526.6L1091.9 531.4L1093.0 525.2L1094.4 526.7L1095.7 525.9L1097.7 534.5L1099.1 522.0L1100.5 521.5L1102.0 521.8L1103.7 538.1L1104.7 521.9L1105.6 521.2L1107.0 536.9L1108.1 519.7L1109.5 521.8L1111.0 520.2L1112.9 530.7L1114.0 515.9L1115.3 521.0L1116.7 528.5L1118.5 541.5L1119.5 528.2L1120.9 527.8L1123.0 540.2L1124.1 529.6L1125.5 528.3L1126.8 531.3L1128.8 534.7L1129.3 537.8L1129.8 539.9L1130.3 542.1L1130.8 544.4L1131.3 548.0L1132.8 548.3L1134.3 548.4L1135.8 548.4L1137.3 548.3L1138.8 548.4L1140.3 548.4L1141.8 548.3L1143.3 548.4L1144.8 548.4L1146.3 548.4L1147.8 548.4L1149.3 548.4L1150.8 548.4L1152.3 548.4L1153.8 548.4L1155.3 548.5L1156.8 548.4L1158.3 548.5L1159.8 548.4L1161.3 548.4L1162.8 548.4L1164.3 534.6L1164.8 531.1L1165.3 526.9L1165.8 525.4L1166.3 526.0L1166.8 524.0L1167.3 521.2L1167.8 521.7L1168.3 524.3L1168.8 526.2L1169.3 528.7L1169.8 530.4L1170.3 532.0L1170.8 535.2L1171.3 538.5L1171.8 536.8L1172.3 533.2L1172.8 530.3L1173.3 530.4L1173.8 532.2L1174.3 533.5L1174.8 534.7L1175.3 536.2L1175.8 538.7L1176.3 540.5L1176.8 542.4L1177.3 544.5L1177.8 545.3L1178.3 533.8L1178.8 513.2L1179.3 512.3L1179.8 548.0L1181.3 542.8L1181.8 538.5L1182.3 532.5L1182.8 528.4L1183.3 525.8L1183.8 525.2L1184.3 522.8L1184.8 522.6L1185.3 524.3L1185.8 525.0L1186.3 526.7L1186.8 527.8L1187.3 530.6L1187.8 535.5L1188.3 539.5L1188.8 543.7L1189.3 545.5L1189.8 545.4L1190.3 545.6L1190.8 545.7L1191.3 546.1L1191.8 548.0L1193.3 540.1L1193.8 539.2L1194.3 538.7L1194.8 537.2L1195.3 537.7L1195.8 539.0L1196.3 540.0L1196.8 540.6L1197.3 542.1L1197.8 543.7L1198.3 545.6L1198.8 543.7L1199.3 540.1L1199.8 537.5L1200.3 535.5L1200.8 531.7L1201.3 530.7L1201.8 526.7L1202.3 526.4L1202.8 524.0L1203.3 524.7L1203.8 522.4L1204.3 521.8L1204.8 521.2L1205.3 521.9L1205.8 520.1L1206.3 522.1L1206.8 523.1L1207.3 524.2L1207.8 523.6L1208.3 526.8L1208.8 530.0L1209.3 533.4L1209.8 536.3L1210.3 539.9L1210.8 538.3L1211.3 534.2L1211.8 530.2L1212.3 525.7L1212.8 523.9L1213.3 521.6L1213.8 517.9L1214.3 522.5L1214.8 527.4L1215.3 532.2L1215.8 532.0L1216.3 526.5L1216.8 522.1L1217.3 521.2L1217.8 520.2L1218.3 518.6L1218.8 518.2L1219.3 522.2L1219.8 527.2L1220.3 533.4L1220.8 539.5L1221.3 540.7L1221.8 539.3L1222.3 538.2L1222.8 537.2L1223.3 535.6L1223.8 534.3L1224.3 533.6L1224.8 531.4L1225.3 531.8L1225.8 529.2L1226.3 528.1L1226.8 530.3L1227.3 531.0L1227.8 532.7L1228.3 533.4L1228.8 534.7L1229.3 536.1L1229.8 537.6L1230.3 539.3L1230.8 540.3L1231.3 542.3L1231.8 543.7L1232.3 545.0L1232.8 545.9L1233.3 548.2L1234.8 548.3L1236.3 548.4L1237.8 548.3L1239.3 548.3L1240.8 548.4L1242.3 548.4L1243.8 548.4L1245.3 548.4L1246.8 548.5L1248.3 548.4L1249.8 548.5L1251.3 548.4L1252.8 548.4L1254.3 548.3L1255.8 530.9L1256.3 528.0L1256.8 527.4L1257.3 513.1L1257.8 512.3L1258.3 529.7L1258.8 537.1L1259.3 541.6L1259.8 539.0L1260.3 532.4L1260.8 527.1L1261.3 523.1L1261.8 524.7L1262.3 523.0L1262.8 522.2L1263.3 522.6L1263.8 521.9L1264.3 521.7L1264.8 520.5L1265.3 520.6L1265.8 521.0L1266.3 520.3L1266.8 522.1L1267.3 521.3L1267.8 520.2L1268.3 522.2L1268.8 521.5L1269.3 523.4L1269.8 522.7L1270.3 524.7L1270.8 528.3L1271.3 532.3L1271.8 536.1L1272.3 534.9L1272.8 533.4L1273.3 532.0L1273.8 528.5L1274.3 528.6L1274.8 526.9L1275.3 526.4L1275.8 524.9L1276.3 522.9L1276.8 522.3L1277.3 520.2L1277.8 521.1L1278.3 520.1L1278.8 520.2L1279.3 520.1L1279.8 522.1L1280.3 520.7L1280.8 523.1L1281.3 525.1L1281.8 529.3L1282.3 532.1L1282.8 535.3L1283.3 534.8L1283.8 532.4L1284.3 529.9L1284.8 526.8L1285.3 527.1L1285.8 524.0L1286.3 524.6L1286.8 523.1L1287.3 521.9L1287.8 519.5L1288.3 521.7L1288.8 521.1L1289.3 521.9L1289.8 522.6L1290.3 522.5L1290.8 521.3L1291.3 521.4L1291.8 521.3L1292.3 525.8L1292.8 530.4L1293.3 535.9L1293.8 533.0L1294.3 525.8L1294.8 519.8L1295.3 519.2L1295.8 519.8L1296.3 519.6L1296.8 521.6L1297.3 520.9L1297.8 522.7L1298.3 526.0L1298.8 527.5L1299.3 529.0L1299.8 530.5L1300.3 532.3L1300.8 536.7L1301.3 539.8L1301.8 543.1L1302.3 548.0L1303.8 548.3L1305.3 548.3L1306.8 548.3L1308.3 548.4L1309.8 548.4L1311.3 548.3L1312.8 548.4L1314.3 548.4L1315.8 548.4L1317.3 548.4L1318.8 548.5L1320.3 548.4L1321.8 548.5L1323.3 548.5L1324.8 548.4L1326.3 548.4L1327.8 532.0L1328.3 528.7L1328.8 525.9L1329.3 525.0L1329.8 520.8L1330.3 518.7L1330.8 518.9L1331.3 521.4L1331.8 525.4L1332.3 527.4L1332.8 529.5L1333.3 532.4L1333.8 536.0L1334.3 537.6L1334.8 535.9L1335.3 530.3L1335.8 525.5L1336.3 523.0L1336.8 520.7L1337.3 522.1L1337.8 519.8L1338.3 521.3L1338.8 519.8L1339.3 518.1L1339.8 519.2L1340.3 517.5L1340.8 519.6L1341.3 519.1L1341.8 520.6L1342.3 521.7L1342.8 520.5L1343.3 522.5L1343.8 522.9L1344.3 526.4L1344.8 531.1L1345.3 535.3L1345.8 534.8L1346.3 530.8L1346.8 525.3L1347.3 522.9L1347.8 520.8L1348.3 517.6L1348.8 519.1L1349.3 519.4L1349.8 522.5L1350.3 522.5L1350.8 523.9L1351.3 526.9L1351.8 533.3L1352.3 537.4L1352.8 536.0L1353.3 532.1L1353.8 529.1L1354.3 529.3L1354.8 528.8L1355.3 530.1L1355.8 528.8L1356.3 529.9L1356.8 530.1L1357.3 530.4L1357.8 528.9L1358.3 529.7L1358.8 533.9L1359.3 540.8L1359.8 541.5L1360.3 538.7L1360.8 536.8L1361.3 534.5L1361.8 531.4L1362.3 530.9L1362.8 529.3L1363.3 529.3L1363.8 527.4L1364.3 527.0L1364.8 527.1L1365.3 526.3L1365.8 523.8L1366.3 526.0L1366.8 524.9L1367.3 526.3L1367.8 526.5L1368.3 526.8L1368.8 526.5L1369.3 529.0L1369.8 529.4L1370.3 531.6L1370.8 535.2L1371.3 538.5L1371.8 542.0L1372.3 540.1L1372.8 535.6L1373.3 530.8L1373.8 527.1L1374.3 521.8L1374.8 517.7L1375.3 516.9L1375.8 515.8L1376.3 520.1L1376.8 522.5L1377.3 525.2L1377.8 527.0L1378.3 528.3L1378.8 531.5L1379.3 532.7L1379.8 533.9L1380.3 536.2L1380.8 538.4L1381.3 540.2L1381.8 542.2L1382.3 543.7L1382.8 544.4L1383.3 545.6L1383.8 548.1L1385.3 548.1L1386.8 548.5L1388.3 548.4L1389.8 548.5L1391.3 548.4L1392.8 548.5L1394.3 548.4L1395.8 548.5L1397.3 548.4L1398.8 548.5L1400.3 548.5L1401.8 548.5L1403.3 548.5L1404.8 548.5L1406.3 538.4L1406.8 530.3L1407.3 526.1L1407.8 523.9L1408.3 521.1L1408.8 519.3L1409.3 519.4L1409.8 519.1L1410.3 518.9L1410.8 520.0L1411.3 519.3L1411.8 519.5L1412.3 520.9L1412.8 520.4L1413.3 519.6L1413.8 519.5L1414.3 520.7L1414.8 521.6L1415.3 521.4L1415.8 521.7L1416.3 520.9L1416.8 520.9L1417.3 523.4L1417.8 525.3L1418.3 525.4L1418.8 526.3L1419.3 530.6L1419.8 535.6L1420.3 541.2L1420.8 542.2L1421.3 540.2L1421.8 538.9L1422.3 537.5L1422.8 534.4L1423.3 528.8L1423.8 525.3L1424.3 525.8L1424.8 529.9L1425.3 536.0L1425.8 536.8L1426.3 537.0L1426.8 536.7L1427.3 536.6L1427.8 535.4L1428.3 535.7L1428.8 535.0L1429.3 535.4L1429.8 534.8L1430.3 535.3L1430.8 535.3L1431.3 535.5L1431.8 535.5L1432.3 536.9L1432.8 537.0L1433.3 538.3L1433.8 540.2L1434.3 542.4L1434.8 539.1L1435.3 532.2L1435.8 527.2L1436.3 522.6L1436.8 522.1L1437.3 520.8L1437.8 517.6L1438.3 518.2L1438.8 516.5L1439.3 514.8L1439.8 515.5L1440.3 517.9L1440.8 518.3L1441.3 518.0L1441.8 520.4L1442.3 520.0L1442.8 519.1L1443.3 520.6L1443.8 518.4L1444.3 519.5L1444.8 519.5L1445.3 520.4L1445.8 521.0L1446.3 523.5L1446.8 523.7L1447.3 526.6L1447.8 529.2L1448.3 532.6L1448.8 536.5L1449.3 539.1L1449.8 542.1L1450.3 545.1L1450.8 548.0L1452.3 548.1L1453.8 548.1L1455.3 548.2L1456.8 548.3L1458.3 544.3L1458.8 544.7L1459.3 546.0L1459.8 548.2L1461.3 548.4L1462.8 548.3L1464.3 548.3L1465.8 548.3L1467.3 548.3L1468.8 548.3L1470.3 548.3L1471.8 548.4L1473.3 548.3L1474.8 548.1L1476.3 546.1L1476.8 548.1L1478.3 548.2L1479.8 532.9L1480.3 525.3L1480.8 520.9L1481.3 518.1L1481.8 516.5L1482.3 516.2L1482.8 518.5L1483.3 519.9L1483.8 521.5L1484.3 522.5L1484.8 524.4L1485.3 527.3L1485.8 528.6L1486.3 528.5L1486.8 529.3L1487.3 531.1L1487.8 531.2L1488.3 532.3L1488.8 533.2L1489.3 535.7L1489.8 539.3L1490.3 538.6L1490.8 533.5L1491.3 529.5L1491.8 525.5L1492.3 522.5L1492.8 522.7L1493.3 521.9L1493.8 521.4L1494.3 521.3L1494.8 521.6L1495.3 523.5L1495.8 522.7L1496.3 524.7L1496.8 523.3L1497.3 523.9L1497.8 524.5L1498.3 526.1L1498.8 526.3L1499.3 526.7L1499.8 526.0L1500.3 527.8L1500.8 528.1L1501.3 528.1L1501.8 528.2L1502.3 527.3L1502.8 528.4L1503.3 531.7L1503.8 534.8L1504.3 538.1L1504.8 536.0L1505.3 532.9L1505.8 528.1L1506.3 524.7L1506.8 524.1L1507.3 522.5L1507.8 523.6L1508.3 523.3L1508.8 524.9L1509.3 526.8L1509.8 526.2L1510.3 526.8L1510.8 528.1L1511.3 530.6L1511.8 532.8L1512.3 536.1L1512.8 535.0L1513.3 530.5L1513.8 527.5L1514.3 524.8L1514.8 523.7L1515.3 523.0L1515.8 521.3L1516.3 520.1L1516.8 517.9L1517.3 519.3L1517.8 516.6L1518.3 520.0L1518.8 518.2L1519.3 519.9L1519.8 520.9L1520.3 522.7L1520.8 522.6L1521.3 523.6L1521.8 523.6L1522.3 524.2L1522.8 527.1L1523.3 526.7L1523.8 529.1L1524.3 530.5L1524.8 535.2L1525.3 538.1L1525.8 542.1L1526.3 539.3L1526.8 533.8L1527.3 528.0L1527.8 525.7L1528.3 524.6L1528.8 523.1L1529.3 522.4L1529.8 523.0L1530.3 525.5L1530.8 527.2L1531.3 528.1L1531.8 531.2L1532.3 536.6L1532.8 541.7L1533.3 541.0L1533.8 537.5L1534.3 533.2L1534.8 529.9L1535.3 529.8L1535.8 532.4L1536.3 534.8L1536.8 536.5L1537.3 539.5L1537.8 542.0L1538.3 539.3L1538.8 534.7L1539.3 529.2L1539.8 526.1L1540.3 523.4L1540.8 520.7L1541.3 519.5L1541.8 522.4L1542.3 522.6L1542.8 522.8L1543.3 523.1L1543.8 527.0L1544.3 528.9L1544.8 532.6L1545.3 535.8L1545.8 538.6L1546.3 540.6L1546.8 543.6L1547.3 544.7L1547.8 545.8L1548.3 548.2L1549.8 548.3L1551.3 548.3L1552.8 548.3L1554.3 548.4L1555.8 548.4L1557.3 548.4L1558.8 548.4L1560.3 548.4L1561.8 548.5L1563.3 548.4L1564.8 548.5L1566.3 548.5L1567.8 536.2L1568.3 529.5L1568.8 524.0L1569.3 520.2L1569.8 517.5L1570.3 519.9L1570.8 523.1L1571.3 525.8L1571.8 528.6L1572.3 530.9L1572.8 535.3L1573.3 539.8L1573.8 537.0L1574.3 532.3L1574.8 526.9L1575.3 523.2L1575.8 520.7L1576.3 517.0L1576.8 518.3L1577.3 517.5L1577.8 520.0L1578.3 518.5L1578.8 519.2L1579.3 520.3L1579.8 521.6L1580.3 522.9L1580.8 525.1L1581.3 525.7L1581.8 527.3L1582.3 526.6L1582.8 527.5L1583.3 528.6L1583.8 527.9L1584.3 532.4L1584.8 537.2L1585.3 536.3L1585.8 531.7L1586.3 525.2L1586.8 522.5L1587.3 521.4L1587.8 518.1L1588.3 519.4L1588.8 520.8L1589.3 521.5L1589.8 524.0L1590.3 526.0L1590.8 530.6L1591.3 538.8L1591.8 537.6L1592.3 532.7L1592.8 528.3L1593.3 526.7L1593.8 524.2L1594.3 523.5L1594.8 521.3L1595.3 519.0L1595.8 518.8L1596.3 519.5L1596.8 518.8L1597.3 521.2L1597.8 522.1L1598.3 523.1L1598.8 523.1L1599.3 527.9L1599.8 533.7L1600.3 539.0L1600.8 537.2L1601.3 531.1L1601.8 526.3L1602.3 523.2L1602.8 519.7L1603.3 517.6L1603.8 519.9L1604.3 523.2L1604.8 525.9L1605.3 526.9L1605.8 532.3L1606.3 537.1L1606.8 533.1L1607.3 523.4L1607.8 523.7L1608.3 523.9L1608.8 525.5L1609.3 528.5L1609.8 529.9L1610.3 532.3L1610.8 534.4L1611.3 536.5L1611.8 537.7L1612.3 539.0L1612.8 539.5L1613.3 540.5L1613.8 542.3L1614.3 543.9L1614.8 545.1L1615.3 548.2L1616.8 548.4L1618.3 548.3L1619.8 548.4L1621.3 548.4L1622.8 548.5L1624.3 548.5L1625.8 537.5L1626.3 531.7L1626.8 528.3L1627.3 526.6L1627.8 525.2L1628.3 525.6L1628.8 524.7L1629.3 523.0L1629.8 522.0L1630.3 521.8L1630.8 522.4L1631.3 522.4L1631.8 522.7L1632.3 522.8L1632.8 522.1L1633.3 522.4L1633.8 521.5L1634.3 522.9L1634.8 524.3L1635.3 525.5L1635.8 525.6L1636.3 524.6L1636.8 525.4L1637.3 529.5L1637.8 534.2L1638.3 537.2L1638.8 537.2L1639.3 533.4L1639.8 531.3L1640.3 532.1L1640.8 533.8L1641.3 536.3L1641.8 538.0L1642.3 535.8L1642.8 531.4L1643.3 527.8L1643.8 524.6L1644.3 523.8L1644.8 523.7L1645.3 520.2L1645.8 520.6L1646.3 521.8L1646.8 524.4L1647.3 524.5L1647.8 525.6L1648.3 529.2L1648.8 535.2L1649.3 539.7L1649.8 538.1L1650.3 534.2L1650.8 529.5L1651.3 527.9L1651.8 526.3L1652.3 526.2L1652.8 528.3L1653.3 531.1L1653.8 532.8L1654.3 534.6L1654.8 537.6L1655.3 540.8L1655.8 544.0L1656.3 545.1L1656.8 548.1L1658.3 548.2L1659.8 548.3L1661.3 548.3L1662.8 548.3L1662.8 550.3L1661.3 550.4L1659.8 550.4L1658.3 550.4L1656.8 550.6L1656.3 553.6L1655.8 554.5L1655.3 557.4L1654.8 560.5L1654.3 565.0L1653.8 566.2L1653.3 569.5L1652.8 570.2L1652.3 571.8L1651.8 572.5L1651.3 571.9L1650.8 568.9L1650.3 564.4L1649.8 560.9L1649.3 559.2L1648.8 564.9L1648.3 568.8L1647.8 573.1L1647.3 573.4L1646.8 575.5L1646.3 578.0L1645.8 578.6L1645.3 579.5L1644.8 576.8L1644.3 574.5L1643.8 573.8L1643.3 570.6L1642.8 566.9L1642.3 562.6L1641.8 560.4L1641.3 563.3L1640.8 565.9L1640.3 568.1L1639.8 569.1L1639.3 566.1L1638.8 561.6L1638.3 561.8L1637.8 565.9L1637.3 570.7L1636.8 573.1L1636.3 574.7L1635.8 575.5L1635.3 575.9L1634.8 576.3L1634.3 576.3L1633.8 578.5L1633.3 576.1L1632.8 578.1L1632.3 576.3L1631.8 578.3L1631.3 577.1L1630.8 578.7L1630.3 578.6L1629.8 577.4L1629.3 576.6L1628.8 575.9L1628.3 575.7L1627.8 574.4L1627.3 573.4L1626.8 571.0L1626.3 569.4L1625.8 562.1L1624.3 550.2L1622.8 550.2L1621.3 550.2L1619.8 550.2L1618.3 550.3L1616.8 550.3L1615.3 550.5L1614.8 553.5L1614.3 555.4L1613.8 556.7L1613.3 558.2L1612.8 559.7L1612.3 560.0L1611.8 561.9L1611.3 562.3L1610.8 565.5L1610.3 566.5L1609.8 569.9L1609.3 572.0L1608.8 573.8L1608.3 576.3L1607.8 577.6L1607.3 575.2L1606.8 565.5L1606.3 561.5L1605.8 566.3L1605.3 572.4L1604.8 574.5L1604.3 578.0L1603.8 580.4L1603.3 582.3L1602.8 580.4L1602.3 577.2L1601.8 573.2L1601.3 566.7L1600.8 562.1L1600.3 560.1L1599.8 565.7L1599.3 570.2L1598.8 575.8L1598.3 576.9L1597.8 578.3L1597.3 579.2L1596.8 579.6L1596.3 581.1L1595.8 580.8L1595.3 581.0L1594.8 578.4L1594.3 576.4L1593.8 574.9L1593.3 575.0L1592.8 570.2L1592.3 566.1L1591.8 561.2L1591.3 560.6L1590.8 568.5L1590.3 572.3L1589.8 576.4L1589.3 576.7L1588.8 579.0L1588.3 580.1L1587.8 581.1L1587.3 579.9L1586.8 575.4L1586.3 573.7L1585.8 568.1L1585.3 563.5L1584.8 562.2L1584.3 567.4L1583.8 570.2L1583.3 572.4L1582.8 571.2L1582.3 573.3L1581.8 574.4L1581.3 573.5L1580.8 575.3L1580.3 577.4L1579.8 577.0L1579.3 578.4L1578.8 578.6L1578.3 581.6L1577.8 580.5L1577.3 581.6L1576.8 582.9L1576.3 580.3L1575.8 578.3L1575.3 577.7L1574.8 574.1L1574.3 566.6L1573.8 561.8L1573.3 559.0L1572.8 563.2L1572.3 567.4L1571.8 570.9L1571.3 574.5L1570.8 577.3L1570.3 580.8L1569.8 582.1L1569.3 578.0L1568.8 575.3L1568.3 571.4L1567.8 563.8L1566.3 550.2L1564.8 550.2L1563.3 550.2L1561.8 550.2L1560.3 550.2L1558.8 550.2L1557.3 550.2L1555.8 550.3L1554.3 550.3L1552.8 550.3L1551.3 550.3L1549.8 550.3L1548.3 550.5L1547.8 553.0L1547.3 553.8L1546.8 555.5L1546.3 558.3L1545.8 560.6L1545.3 563.2L1544.8 566.3L1544.3 569.3L1543.8 573.0L1543.3 576.2L1542.8 575.4L1542.3 578.1L1541.8 578.6L1541.3 579.4L1540.8 579.2L1540.3 578.2L1539.8 574.2L1539.3 570.0L1538.8 564.6L1538.3 559.6L1537.8 557.0L1537.3 559.7L1536.8 562.5L1536.3 565.5L1535.8 566.6L1535.3 569.4L1534.8 569.6L1534.3 565.5L1533.8 562.1L1533.3 557.9L1532.8 557.8L1532.3 562.8L1531.8 568.2L1531.3 570.2L1530.8 573.5L1530.3 575.2L1529.8 576.2L1529.3 577.2L1528.8 576.4L1528.3 575.3L1527.8 573.7L1527.3 571.9L1526.8 564.7L1526.3 559.5L1525.8 557.1L1525.3 561.1L1524.8 564.1L1524.3 567.7L1523.8 570.2L1523.3 571.8L1522.8 573.7L1522.3 573.6L1521.8 576.3L1521.3 577.1L1520.8 576.2L1520.3 577.8L1519.8 580.4L1519.3 580.6L1518.8 580.5L1518.3 581.0L1517.8 581.3L1517.3 581.2L1516.8 582.2L1516.3 580.3L1515.8 578.0L1515.3 577.6L1514.8 574.7L1514.3 574.3L1513.8 572.3L1513.3 568.5L1512.8 564.0L1512.3 563.2L1511.8 565.7L1511.3 568.3L1510.8 570.4L1510.3 571.8L1509.8 572.0L1509.3 574.1L1508.8 574.8L1508.3 576.3L1507.8 576.1L1507.3 577.6L1506.8 576.0L1506.3 574.2L1505.8 572.0L1505.3 566.9L1504.8 562.8L1504.3 560.9L1503.8 565.5L1503.3 569.0L1502.8 570.8L1502.3 570.8L1501.8 571.7L1501.3 571.2L1500.8 571.8L1500.3 572.8L1499.8 573.9L1499.3 572.6L1498.8 574.0L1498.3 575.1L1497.8 573.4L1497.3 574.1L1496.8 575.9L1496.3 575.5L1495.8 577.6L1495.3 576.3L1494.8 579.0L1494.3 577.8L1493.8 579.6L1493.3 578.6L1492.8 578.3L1492.3 576.4L1491.8 573.9L1491.3 569.9L1490.8 565.7L1490.3 560.5L1489.8 558.9L1489.3 564.0L1488.8 566.9L1488.3 567.7L1487.8 567.7L1487.3 568.9L1486.8 568.9L1486.3 570.6L1485.8 570.9L1485.3 572.5L1484.8 574.9L1484.3 575.6L1483.8 578.4L1483.3 580.6L1482.8 580.9L1482.3 582.3L1481.8 582.3L1481.3 579.6L1480.8 579.8L1480.3 574.9L1479.8 565.9L1478.3 550.4L1476.8 550.6L1476.3 552.9L1474.8 550.6L1473.3 550.3L1471.8 550.3L1470.3 550.3L1468.8 550.4L1467.3 550.3L1465.8 550.3L1464.3 550.3L1462.8 550.3L1461.3 550.4L1459.8 550.4L1459.3 553.0L1458.8 554.0L1458.3 554.2L1456.8 550.3L1455.3 550.4L1453.8 550.5L1452.3 550.6L1450.8 550.6L1450.3 553.8L1449.8 556.9L1449.3 560.4L1448.8 563.5L1448.3 567.0L1447.8 570.3L1447.3 572.2L1446.8 574.5L1446.3 577.5L1445.8 578.3L1445.3 578.0L1444.8 579.2L1444.3 581.9L1443.8 579.6L1443.3 579.4L1442.8 581.4L1442.3 579.2L1441.8 578.2L1441.3 579.3L1440.8 581.7L1440.3 582.8L1439.8 581.8L1439.3 584.8L1438.8 584.6L1438.3 583.1L1437.8 582.4L1437.3 578.4L1436.8 576.8L1436.3 576.9L1435.8 573.8L1435.3 567.0L1434.8 560.1L1434.3 556.1L1433.8 558.5L1433.3 560.7L1432.8 562.7L1432.3 562.5L1431.8 563.2L1431.3 563.1L1430.8 563.3L1430.3 564.7L1429.8 563.5L1429.3 563.8L1428.8 564.2L1428.3 563.5L1427.8 563.5L1427.3 563.1L1426.8 562.1L1426.3 562.3L1425.8 562.8L1425.3 563.4L1424.8 569.2L1424.3 573.1L1423.8 575.9L1423.3 570.2L1422.8 565.5L1422.3 561.2L1421.8 559.9L1421.3 558.5L1420.8 556.8L1420.3 557.3L1419.8 563.2L1419.3 569.3L1418.8 573.2L1418.3 573.1L1417.8 574.7L1417.3 576.4L1416.8 578.8L1416.3 577.4L1415.8 580.2L1415.3 578.3L1414.8 579.8L1414.3 580.5L1413.8 579.1L1413.3 579.9L1412.8 579.5L1412.3 578.6L1411.8 580.4L1411.3 580.0L1410.8 581.1L1410.3 580.9L1409.8 581.4L1409.3 580.1L1408.8 581.0L1408.3 577.3L1407.8 576.2L1407.3 575.5L1406.8 570.6L1406.3 560.7L1404.8 550.2L1403.3 550.1L1401.8 550.2L1400.3 550.1L1398.8 550.1L1397.3 550.2L1395.8 550.1L1394.3 550.2L1392.8 550.1L1391.3 550.2L1389.8 550.2L1388.3 550.2L1386.8 550.1L1385.3 550.4L1383.8 550.6L1383.3 553.3L1382.8 554.2L1382.3 555.1L1381.8 556.4L1381.3 558.8L1380.8 560.8L1380.3 562.8L1379.8 564.6L1379.3 566.4L1378.8 568.3L1378.3 570.2L1377.8 572.6L1377.3 574.0L1376.8 577.2L1376.3 580.8L1375.8 583.5L1375.3 584.5L1374.8 580.7L1374.3 577.0L1373.8 573.9L1373.3 568.7L1372.8 564.1L1372.3 558.5L1371.8 557.2L1371.3 561.0L1370.8 565.2L1370.3 567.5L1369.8 570.6L1369.3 570.8L1368.8 572.8L1368.3 572.5L1367.8 574.0L1367.3 573.9L1366.8 574.3L1366.3 573.6L1365.8 574.7L1365.3 573.1L1364.8 572.2L1364.3 571.3L1363.8 571.9L1363.3 571.1L1362.8 569.0L1362.3 569.1L1361.8 567.9L1361.3 564.5L1360.8 563.0L1360.3 559.9L1359.8 557.2L1359.3 558.4L1358.8 565.6L1358.3 569.7L1357.8 570.4L1357.3 569.2L1356.8 570.4L1356.3 569.6L1355.8 569.5L1355.3 570.3L1354.8 570.5L1354.3 569.0L1353.8 570.4L1353.3 568.5L1352.8 563.9L1352.3 561.7L1351.8 566.7L1351.3 570.9L1350.8 574.8L1350.3 576.2L1349.8 577.0L1349.3 578.7L1348.8 580.5L1348.3 580.7L1347.8 578.3L1347.3 577.3L1346.8 572.8L1346.3 569.7L1345.8 565.0L1345.3 564.5L1344.8 568.1L1344.3 574.2L1343.8 578.5L1343.3 578.1L1342.8 579.6L1342.3 578.7L1341.8 578.9L1341.3 580.9L1340.8 580.6L1340.3 582.4L1339.8 582.2L1339.3 579.9L1338.8 581.3L1338.3 580.5L1337.8 579.3L1337.3 578.5L1336.8 579.4L1336.3 577.9L1335.8 576.5L1335.3 569.9L1334.8 564.4L1334.3 561.2L1333.8 563.2L1333.3 565.9L1332.8 570.0L1332.3 572.5L1331.8 575.3L1331.3 576.1L1330.8 578.3L1330.3 579.3L1329.8 578.0L1329.3 575.9L1328.8 573.4L1328.3 570.5L1327.8 566.0L1326.3 550.3L1324.8 550.2L1323.3 550.2L1321.8 550.2L1320.3 550.2L1318.8 550.2L1317.3 550.2L1315.8 550.2L1314.3 550.2L1312.8 550.2L1311.3 550.2L1309.8 550.3L1308.3 550.3L1306.8 550.3L1305.3 550.3L1303.8 550.3L1302.3 550.7L1301.8 555.7L1301.3 559.5L1300.8 562.2L1300.3 566.9L1299.8 568.2L1299.3 570.5L1298.8 573.8L1298.3 573.5L1297.8 576.7L1297.3 579.4L1296.8 578.0L1296.3 581.0L1295.8 580.9L1295.3 579.7L1294.8 579.1L1294.3 571.8L1293.8 566.6L1293.3 564.4L1292.8 568.0L1292.3 572.9L1291.8 578.5L1291.3 578.4L1290.8 579.1L1290.3 576.8L1289.8 577.6L1289.3 578.8L1288.8 579.5L1288.3 579.2L1287.8 577.5L1287.3 579.2L1286.8 577.2L1286.3 576.6L1285.8 574.3L1285.3 573.9L1284.8 573.0L1284.3 569.3L1283.8 566.5L1283.3 563.6L1282.8 563.8L1282.3 567.0L1281.8 570.9L1281.3 573.7L1280.8 578.1L1280.3 577.0L1279.8 578.5L1279.3 578.2L1278.8 580.3L1278.3 579.5L1277.8 580.8L1277.3 578.0L1276.8 576.7L1276.3 577.4L1275.8 574.1L1275.3 573.2L1274.8 573.2L1274.3 570.7L1273.8 569.3L1273.3 567.2L1272.8 565.6L1272.3 563.9L1271.8 563.7L1271.3 566.5L1270.8 570.5L1270.3 573.7L1269.8 577.8L1269.3 576.6L1268.8 577.5L1268.3 577.1L1267.8 577.0L1267.3 579.2L1266.8 578.0L1266.3 578.3L1265.8 579.4L1265.3 578.3L1264.8 577.5L1264.3 577.4L1263.8 577.2L1263.3 578.2L1262.8 575.6L1262.3 575.6L1261.8 576.8L1261.3 574.9L1260.8 574.0L1260.3 565.7L1259.8 559.5L1259.3 557.2L1258.8 562.8L1258.3 569.4L1257.8 586.3L1257.3 586.3L1256.8 573.1L1256.3 571.7L1255.8 567.0L1254.3 550.3L1252.8 550.2L1251.3 550.2L1249.8 550.2L1248.3 550.2L1246.8 550.2L1245.3 550.2L1243.8 550.2L1242.3 550.3L1240.8 550.3L1239.3 550.3L1237.8 550.3L1236.3 550.3L1234.8 550.3L1233.3 550.4L1232.8 553.0L1232.3 553.8L1231.8 555.3L1231.3 556.5L1230.8 558.8L1230.3 560.4L1229.8 561.7L1229.3 563.6L1228.8 564.6L1228.3 565.8L1227.8 567.1L1227.3 568.0L1226.8 569.7L1226.3 571.0L1225.8 569.7L1225.3 568.1L1224.8 566.7L1224.3 565.4L1223.8 564.5L1223.3 563.6L1222.8 561.7L1222.3 560.3L1221.8 559.9L1221.3 558.7L1220.8 560.1L1220.3 565.7L1219.8 571.8L1219.3 576.8L1218.8 581.3L1218.3 579.6L1217.8 579.8L1217.3 581.0L1216.8 577.7L1216.3 571.5L1215.8 566.9L1215.3 566.2L1214.8 572.1L1214.3 579.7L1213.8 581.8L1213.3 577.6L1212.8 575.5L1212.3 571.9L1211.8 568.6L1211.3 565.0L1210.8 561.1L1210.3 559.4L1209.8 562.9L1209.3 566.3L1208.8 568.6L1208.3 572.2L1207.8 574.8L1207.3 575.3L1206.8 576.0L1206.3 577.1L1205.8 577.6L1205.3 578.1L1204.8 579.0L1204.3 576.4L1203.8 577.2L1203.3 575.9L1202.8 573.3L1202.3 574.6L1201.8 571.3L1201.3 568.9L1200.8 566.3L1200.3 563.8L1199.8 561.9L1199.3 558.6L1198.8 555.0L1198.3 553.2L1197.8 554.8L1197.3 556.9L1196.8 558.4L1196.3 559.5L1195.8 560.5L1195.3 561.9L1194.8 562.0L1194.3 560.4L1193.8 559.5L1193.3 558.2L1191.8 550.6L1191.3 552.7L1190.8 552.8L1190.3 553.2L1189.8 553.2L1189.3 553.5L1188.8 554.9L1188.3 559.5L1187.8 563.3L1187.3 568.0L1186.8 571.4L1186.3 573.4L1185.8 572.6L1185.3 574.4L1184.8 575.8L1184.3 575.5L1183.8 575.2L1183.3 573.5L1182.8 570.7L1182.3 565.9L1181.8 561.0L1181.3 555.7L1179.8 550.6L1179.3 586.1L1178.8 586.3L1178.3 564.7L1177.8 553.4L1177.3 554.3L1176.8 556.5L1176.3 558.8L1175.8 560.4L1175.3 562.5L1174.8 564.0L1174.3 566.0L1173.8 567.4L1173.3 569.1L1172.8 568.8L1172.3 566.4L1171.8 562.1L1171.3 561.0L1170.8 563.5L1170.3 566.5L1169.8 569.3L1169.3 571.2L1168.8 572.4L1168.3 576.2L1167.8 577.7L1167.3 577.3L1166.8 576.4L1166.3 574.0L1165.8 573.5L1165.3 570.7L1164.8 568.7L1164.3 564.7L1162.8 550.3L1161.3 550.2L1159.8 550.2L1158.3 550.1L1156.8 550.2L1155.3 550.2L1153.8 550.2L1152.3 550.2L1150.8 550.2L1149.3 550.2L1147.8 550.2L1146.3 550.3L1144.8 550.2L1143.3 550.2L1141.8 550.3L1140.3 550.2L1138.8 550.3L1137.3 550.3L1135.8 550.3L1134.3 550.3L1132.8 550.3L1131.3 550.7L1130.8 554.4L1130.3 556.3L1129.8 558.6L1129.3 561.4L1128.8 564.5L1126.8 573.4L1125.5 575.9L1124.1 575.7L1123.0 559.5L1120.9 572.5L1119.5 570.7L1118.5 558.7L1116.7 571.5L1115.3 583.7L1114.0 586.3L1112.9 570.4L1111.0 579.2L1109.5 578.3L1108.1 580.7L1107.0 561.6L1105.6 576.1L1104.7 576.9L1103.7 565.7L1102.0 576.9L1100.5 573.9L1099.1 574.9L1097.7 561.7L1095.7 574.6L1094.4 574.6L1093.0 575.7L1091.9 566.0L1089.8 577.5L1088.4 575.7L1087.0 575.9L1085.6 561.5L1084.0 578.0L1082.7 578.4L1081.3 577.0L1079.9 567.7L1078.1 581.1L1076.8 580.0L1075.4 580.9L1074.4 567.7L1073.9 578.9L1072.4 550.2L1070.9 550.1L1069.4 550.2L1067.9 550.2L1066.4 550.2L1064.9 550.2L1063.4 550.2L1061.9 550.2L1060.4 550.3L1058.9 550.2L1057.4 550.3L1055.9 550.3L1054.4 550.4L1053.9 553.1L1053.4 554.4L1052.9 555.9L1052.4 557.1L1051.9 557.8L1051.4 559.3L1050.9 560.6L1050.4 561.9L1049.9 561.4L1049.4 559.0L1048.9 559.1L1048.4 563.8L1047.9 568.0L1047.4 569.3L1046.9 566.2L1046.4 563.0L1045.9 561.5L1045.4 566.3L1043.5 573.1L1042.2 565.9L1041.0 561.1L1039.5 560.7L1038.0 578.6L1036.8 579.9L1035.3 567.2L1033.7 580.2L1032.3 576.0L1031.0 573.8L1029.5 557.0L1027.9 568.9L1026.8 577.8L1025.8 581.6L1024.8 563.8L1023.7 577.1L1022.9 577.4L1021.6 564.0L1020.1 582.7L1019.0 583.2L1017.8 581.6L1016.8 559.1L1015.0 577.6L1013.6 576.2L1012.5 559.7L1010.9 575.1L1009.9 575.9L1008.8 558.2L1007.1 577.9L1005.9 576.8L1004.7 578.5L1003.4 566.8L1001.9 576.0L1000.7 576.5L999.6 558.7L997.9 580.0L996.7 580.3L995.5 577.7L994.2 562.1L993.7 575.5L993.2 572.7L991.7 550.2L990.2 550.2L988.7 550.2L987.2 550.2L985.7 550.2L984.2 550.3L982.7 550.3L981.2 550.2L979.7 550.2L978.2 550.3L976.7 550.3L975.2 550.3L973.7 550.3L972.2 550.7L971.7 553.4L971.2 553.8L970.7 554.7L970.2 555.1L969.7 555.9L969.2 556.8L968.7 557.6L968.2 564.2L967.7 577.0L967.2 582.8L966.7 582.3L966.2 583.9L965.7 584.0L965.2 584.3L964.7 582.4L964.2 581.3L963.7 580.8L963.2 575.3L962.7 570.1L962.2 563.2L961.7 562.3L961.2 568.2L960.7 574.0L960.2 578.8L959.7 580.5L958.1 574.5L957.0 563.4L956.0 563.6L954.7 572.8L953.3 571.3L952.5 573.5L951.3 572.8L950.1 575.6L949.2 576.8L948.2 573.8L946.2 577.6L944.7 575.9L943.3 578.6L941.9 573.4L939.8 582.1L938.4 581.6L937.1 571.8L936.6 572.3L936.1 571.5L935.6 563.5L934.1 550.1L932.6 550.2L931.1 550.2L929.6 550.2L928.1 550.2L926.6 550.2L925.1 550.3L923.6 550.3L922.1 550.3L920.6 550.3L919.1 550.4L917.6 550.4L916.1 550.4L914.6 550.4L913.1 550.5L911.6 550.5L910.1 550.4L908.8 553.7L907.4 553.5L906.0 570.7L904.8 578.0L903.6 566.9L902.2 586.3L901.0 583.9L899.6 571.7L898.0 581.6L896.8 581.7L895.3 564.0L893.1 582.8L891.6 580.7L890.0 575.7L888.8 565.2L887.1 581.8L885.8 580.3L884.6 564.4L883.1 576.0L882.0 576.7L880.9 565.2L879.0 583.9L877.7 583.3L876.4 569.8L874.5 580.3L873.2 579.5L871.8 577.6L870.8 565.3L868.6 584.2L867.1 582.6L865.6 579.6L864.4 562.2L862.7 574.9L861.1 574.5L859.6 572.3L858.6 561.9L857.5 574.5L856.7 576.1L855.4 561.3L853.7 575.5L852.6 575.5L851.1 566.0L849.7 578.1L848.7 579.8L847.6 577.7L846.4 564.8L844.8 571.9L843.7 573.8L842.7 562.3L840.9 574.6L839.7 575.7L838.6 565.3L837.3 573.2L836.1 573.8L835.0 572.9L833.6 567.0L832.2 575.2L831.2 573.5L830.1 573.2L829.0 562.4L827.2 581.5L825.9 585.6L824.6 582.3L823.3 565.9L822.8 577.1L821.3 550.3L819.8 550.4L818.3 550.4L816.8 550.4L814.9 550.2L813.3 550.2L811.8 553.6L810.6 552.5L809.0 560.7L807.8 563.3L806.4 557.5L804.8 563.7L803.4 564.2L801.9 565.1L800.7 557.9L799.1 567.8L797.7 570.1L796.6 558.6L795.0 579.2L794.0 582.8L792.9 557.9L791.6 582.2L790.7 584.9L789.5 561.4L788.2 576.8L787.2 575.7L786.1 560.0L784.9 583.9L784.1 580.8L782.9 561.8L780.8 571.1L779.2 570.5L777.7 569.7L776.6 555.1L775.4 569.9L774.5 571.2L773.2 561.0L771.3 568.1L770.1 570.1L768.8 568.7L767.5 558.8L766.2 570.2L765.2 571.4L763.8 558.5L762.6 571.0L761.8 570.9L760.5 558.3L758.6 570.4L757.4 570.3L756.1 561.0L754.7 576.2L753.6 576.3L752.4 578.3L751.3 561.2L749.1 582.4L747.5 579.8L745.9 581.8L744.5 564.6L742.8 580.1L741.3 580.8L739.8 581.2L738.5 566.9L737.0 550.7L735.5 550.7L735.0 552.8L733.5 550.4L732.0 550.3L730.5 550.3L729.0 550.4L727.5 550.3L726.0 550.3L724.5 550.3L722.3 558.9L720.9 567.0L719.4 579.9L717.9 561.8L716.5 586.3L715.5 584.7L714.5 562.6L712.9 577.1L712.1 578.3L710.9 565.7L709.3 579.2L708.0 578.1L706.6 579.0L705.1 558.3L703.7 579.9L702.6 581.2L701.4 580.1L700.2 565.4L698.9 579.8L697.9 577.5L696.8 578.7L695.8 558.0L694.1 585.4L692.7 584.8L691.3 583.7L689.8 559.6L688.2 575.5L686.9 575.6L685.5 561.2L683.9 581.7L682.8 582.1L681.7 580.2L680.4 565.4L678.9 581.4L678.0 579.5L676.7 561.6L675.1 570.2L673.9 567.5L672.8 568.9L671.3 557.6L669.7 571.7L668.3 574.9L667.0 564.1L665.5 550.4Z" fill="#1e90ff" stroke="#3a6c9f" stroke-width="1" stroke-linejoin="round"/><use href="#bw" y="74.9"/></svg>
<div class="t" style="left:671px;top:366.7px;color:#1c1c1c;font-size:12.8px">Audio 00</div>
<div class="t" style="left:671px;top:517.5px;color:#1c1c1c;font-size:12.8px">Audio 01</div>
<svg style="left:0;top:0" width="1936" height="1056" viewBox="0 0 1936 1056" fill="none" stroke-linecap="round" stroke-linejoin="round"><defs><clipPath id="cin"><rect x="0" y="0" width="1928" height="1056"/></clipPath><clipPath id="cout"><rect x="1928" y="0" width="8" height="1056"/></clipPath></defs><path d="M1662.3 312.6C1658.7 315.9 1648.2 324.3 1640.7 332.4C1633.2 340.5 1624.2 351.6 1617.3 361.2C1610.4 370.8 1604.5 380.4 1599.4 390.0C1594.3 399.6 1590.4 408.5 1586.8 418.7C1583.2 428.9 1580.2 440.8 1577.8 451.0C1575.4 461.2 1574.5 470.3 1572.4 479.9C1570.3 489.5 1567.5 499.6 1565.2 508.6C1562.9 517.6 1559.9 526.6 1558.7 533.8C1557.5 541.0 1556.9 545.2 1558.0 551.8C1559.1 558.4 1561.6 565.6 1565.2 573.4C1568.8 581.2 1574.2 590.2 1579.6 598.6C1585.0 607.0 1591.9 615.9 1597.6 623.7C1603.3 631.5 1608.9 639.8 1613.7 645.3C1618.5 650.8 1620.6 654.7 1626.3 656.8C1632.0 658.9 1641.3 658.0 1647.9 657.9C1654.5 657.8 1659.9 657.9 1665.9 656.1C1671.9 654.3 1677.9 651.9 1683.9 647.1C1689.9 642.3 1696.5 634.8 1701.9 627.3C1707.3 619.8 1712.6 611.2 1716.3 602.2C1720.0 593.2 1722.7 583.0 1724.2 573.4C1725.7 563.8 1726.0 555.4 1725.3 544.6C1724.6 533.8 1722.3 521.2 1719.9 508.6C1717.5 496.0 1714.2 482.2 1710.9 469.0C1707.6 455.8 1703.3 442.1 1700.0 429.5C1696.7 416.9 1693.4 404.9 1691.0 393.5C1688.6 382.1 1686.9 370.8 1685.7 361.2C1684.5 351.6 1685.1 342.6 1683.9 336.0C1682.7 329.4 1680.4 325.2 1678.5 321.6C1676.6 318.0 1673.4 315.6 1672.4 314.4" stroke="rgba(215,28,40,0.62)" stroke-width="3"/><path d="M1846.0 296.5C1843.8 297.5 1836.8 300.1 1833.0 302.3C1829.2 304.5 1827.0 306.2 1823.5 309.6C1820.0 313.0 1815.8 316.9 1812.0 322.5C1808.2 328.1 1804.7 335.3 1801.0 343.4C1797.3 351.4 1794.3 361.2 1790.0 370.8C1785.7 380.4 1780.2 388.4 1775.0 401.0C1769.8 413.6 1763.0 430.6 1758.5 446.5C1754.0 462.4 1750.6 479.8 1748.0 496.5C1745.4 513.2 1743.3 531.2 1743.0 546.5C1742.7 561.8 1743.4 574.1 1746.0 588.0C1748.6 601.9 1753.0 616.8 1758.5 630.0C1764.0 643.2 1772.1 657.1 1779.0 667.5C1785.9 677.9 1792.7 686.1 1800.0 692.5C1807.3 698.9 1815.3 704.4 1823.0 705.8C1830.7 707.2 1837.3 705.8 1846.0 700.8C1854.7 695.8 1866.0 685.7 1875.0 676.0C1884.0 666.3 1892.3 654.3 1900.0 642.5C1907.7 630.7 1915.5 616.1 1921.0 605.0C1926.5 593.9 1928.8 586.8 1933.0 576.0C1937.2 565.2 1943.2 552.7 1946.0 540.0C1948.8 527.3 1950.3 513.0 1950.0 500.0C1949.7 487.0 1946.3 472.0 1944.0 462.0C1941.7 452.0 1938.6 447.4 1936.0 440.0C1933.4 432.6 1930.9 424.5 1928.2 417.5C1925.5 410.5 1923.0 405.5 1920.0 398.0C1917.0 390.5 1913.6 381.5 1910.4 372.4C1907.2 363.3 1904.2 352.0 1901.0 343.4C1897.8 334.8 1894.5 327.4 1891.0 321.0C1887.5 314.6 1884.3 309.9 1879.8 304.8C1875.2 299.7 1869.1 294.5 1863.7 290.3C1858.3 286.1 1852.1 282.5 1847.6 279.8C1843.1 277.1 1838.8 274.3 1836.5 274.0C1834.2 273.7 1834.6 276.2 1834.0 278.0C1833.4 279.8 1833.4 281.9 1833.0 285.0C1832.6 288.1 1831.8 294.8 1831.5 296.7" stroke="rgba(232,30,50,0.62)" stroke-width="3.7" clip-path="url(#cin)"/><path d="M1846.0 296.5C1843.8 297.5 1836.8 300.1 1833.0 302.3C1829.2 304.5 1827.0 306.2 1823.5 309.6C1820.0 313.0 1815.8 316.9 1812.0 322.5C1808.2 328.1 1804.7 335.3 1801.0 343.4C1797.3 351.4 1794.3 361.2 1790.0 370.8C1785.7 380.4 1780.2 388.4 1775.0 401.0C1769.8 413.6 1763.0 430.6 1758.5 446.5C1754.0 462.4 1750.6 479.8 1748.0 496.5C1745.4 513.2 1743.3 531.2 1743.0 546.5C1742.7 561.8 1743.4 574.1 1746.0 588.0C1748.6 601.9 1753.0 616.8 1758.5 630.0C1764.0 643.2 1772.1 657.1 1779.0 667.5C1785.9 677.9 1792.7 686.1 1800.0 692.5C1807.3 698.9 1815.3 704.4 1823.0 705.8C1830.7 707.2 1837.3 705.8 1846.0 700.8C1854.7 695.8 1866.0 685.7 1875.0 676.0C1884.0 666.3 1892.3 654.3 1900.0 642.5C1907.7 630.7 1915.5 616.1 1921.0 605.0C1926.5 593.9 1928.8 586.8 1933.0 576.0C1937.2 565.2 1943.2 552.7 1946.0 540.0C1948.8 527.3 1950.3 513.0 1950.0 500.0C1949.7 487.0 1946.3 472.0 1944.0 462.0C1941.7 452.0 1938.6 447.4 1936.0 440.0C1933.4 432.6 1930.9 424.5 1928.2 417.5C1925.5 410.5 1923.0 405.5 1920.0 398.0C1917.0 390.5 1913.6 381.5 1910.4 372.4C1907.2 363.3 1904.2 352.0 1901.0 343.4C1897.8 334.8 1894.5 327.4 1891.0 321.0C1887.5 314.6 1884.3 309.9 1879.8 304.8C1875.2 299.7 1869.1 294.5 1863.7 290.3C1858.3 286.1 1852.1 282.5 1847.6 279.8C1843.1 277.1 1838.8 274.3 1836.5 274.0C1834.2 273.7 1834.6 276.2 1834.0 278.0C1833.4 279.8 1833.4 281.9 1833.0 285.0C1832.6 288.1 1831.8 294.8 1831.5 296.7" stroke="#f40000" stroke-width="4.5" clip-path="url(#cout)"/></svg>
</body></html>
